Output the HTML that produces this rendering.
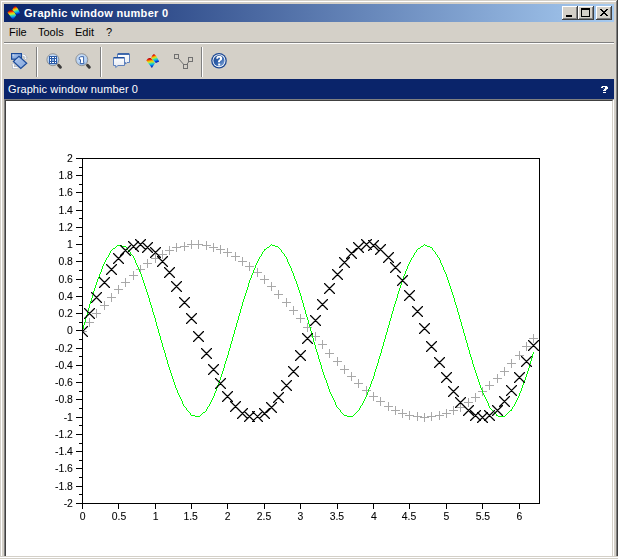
<!DOCTYPE html>
<html><head><meta charset="utf-8">
<style>
html,body{margin:0;padding:0}
body{width:618px;height:559px;overflow:hidden;position:relative;background:#d4d0c8;font-family:"Liberation Sans",sans-serif}
.a{position:absolute}
.t{position:absolute;white-space:nowrap;line-height:1}
</style></head><body>
<!-- window outer border -->
<div class="a" style="left:1px;top:1px;width:615px;height:1px;background:#fff"></div>
<div class="a" style="left:1px;top:1px;width:1px;height:555px;background:#fff"></div>
<div class="a" style="left:616px;top:1px;width:1px;height:555px;background:#808080"></div>
<div class="a" style="left:617px;top:0;width:1px;height:556px;background:#404040"></div>
<!-- title bar -->
<div class="a" style="left:4px;top:4px;width:610px;height:18px;background:linear-gradient(to right,#0a246a,#a6caf0)"></div>
<svg class="a" style="left:0;top:0" width="30" height="24" viewBox="0 0 30 24">
<defs>
<linearGradient id="lgA" gradientUnits="userSpaceOnUse" x1="7.6" y1="7.3" x2="8.9" y2="16.8"><stop offset="0" stop-color="#b00000"/><stop offset="0.12" stop-color="#f02000"/><stop offset="0.26" stop-color="#f8b000"/><stop offset="0.4" stop-color="#c8e830"/><stop offset="0.52" stop-color="#40e0a0"/><stop offset="0.66" stop-color="#10b0e8"/><stop offset="0.82" stop-color="#0048e0"/><stop offset="1" stop-color="#000098"/></linearGradient>
<linearGradient id="lgB" gradientUnits="userSpaceOnUse" x1="10.8" y1="3.3" x2="13.6" y2="12"><stop offset="0" stop-color="#b00000"/><stop offset="0.12" stop-color="#f02000"/><stop offset="0.26" stop-color="#f8b000"/><stop offset="0.4" stop-color="#c8e830"/><stop offset="0.52" stop-color="#40e0a0"/><stop offset="0.66" stop-color="#10b0e8"/><stop offset="0.82" stop-color="#0048e0"/><stop offset="1" stop-color="#000098"/></linearGradient>
</defs>
<g transform="translate(4.2 3)"><path d="M3.3 9.6 C4.6 7.4 6.2 6.7 7.4 7.1 C8.6 7.5 9.6 8.3 10.4 9.4 L11.9 12.3 L8.9 16.9 Z" fill="url(#lgA)"/>
<path d="M8.1 6.9 C9 4.6 10 3.1 11 3.2 C12 3.3 13 4.6 13.8 5.9 L16.2 10.4 L12.9 12.1 Z" fill="url(#lgB)"/></g>
</svg>
<div class="t" style="left:24px;top:8px;font-size:11px;font-weight:bold;color:#fff;letter-spacing:0.3px">Graphic window number 0</div>
<!-- caption buttons -->
<div class="a" style="left:562px;top:6px;width:16px;height:14px;background:#d4d0c8;box-shadow:inset -1px -1px #404040,inset 1px 1px #fff,inset -2px -2px #808080"></div>
<div class="a" style="left:566px;top:15px;width:6px;height:2px;background:#000"></div>
<div class="a" style="left:578px;top:6px;width:16px;height:14px;background:#d4d0c8;box-shadow:inset -1px -1px #404040,inset 1px 1px #fff,inset -2px -2px #808080"></div>
<div class="a" style="left:581px;top:8px;width:9px;height:9px;box-sizing:border-box;border:1px solid #000;border-top-width:2px"></div>
<div class="a" style="left:596px;top:6px;width:16px;height:14px;background:#d4d0c8;box-shadow:inset -1px -1px #404040,inset 1px 1px #fff,inset -2px -2px #808080"></div>
<svg class="a" style="left:596px;top:6px" width="16" height="14" viewBox="0 0 16 14" shape-rendering="crispEdges">
<path d="M4 3h2v1h-2zM10 3h2v1h-2zM5 4h2v1h-2zM9 4h2v1h-2zM6 5h4v1h-4zM7 6h2v1h-2zM6 7h4v1h-4zM5 8h2v1h-2zM9 8h2v1h-2zM4 9h2v1h-2zM10 9h2v1h-2z" fill="#000"/>
</svg>
<!-- menu -->
<div class="t" style="left:9px;top:27px;font-size:11px;color:#000">File</div>
<div class="t" style="left:38px;top:27px;font-size:11px;color:#000">Tools</div>
<div class="t" style="left:75px;top:27px;font-size:11px;color:#000">Edit</div>
<div class="t" style="left:106px;top:27px;font-size:11px;color:#000">?</div>
<div class="a" style="left:4px;top:42px;width:610px;height:1px;background:#808080"></div>
<div class="a" style="left:4px;top:43px;width:610px;height:1px;background:#fff"></div>
<!-- toolbar separators -->
<div class="a" style="left:36px;top:47px;width:1px;height:30px;background:#808080"></div>
<div class="a" style="left:37px;top:47px;width:1px;height:30px;background:#fff"></div>
<div class="a" style="left:100px;top:47px;width:1px;height:30px;background:#808080"></div>
<div class="a" style="left:101px;top:47px;width:1px;height:30px;background:#fff"></div>
<div class="a" style="left:201px;top:47px;width:1px;height:30px;background:#808080"></div>
<div class="a" style="left:202px;top:47px;width:1px;height:30px;background:#fff"></div>
<!-- toolbar icons -->
<svg class="a" style="left:0;top:44px" width="240" height="34" viewBox="0 44 240 34">
<defs>
<linearGradient id="bl" x1="0" y1="0" x2="1" y2="1"><stop offset="0" stop-color="#c0d4f2"/><stop offset="0.5" stop-color="#8eaee0"/><stop offset="1" stop-color="#6a92d0"/></linearGradient>
<linearGradient id="bl2" x1="0" y1="0" x2="1" y2="1"><stop offset="0" stop-color="#aac4ec"/><stop offset="1" stop-color="#86a8dc"/></linearGradient>
<radialGradient id="mg" cx="0.45" cy="0.4" r="0.6"><stop offset="0" stop-color="#e4eefc"/><stop offset="0.7" stop-color="#b4d0f2"/><stop offset="1" stop-color="#98bce8"/></radialGradient>
<linearGradient id="hg" x1="0" y1="0" x2="1" y2="1"><stop offset="0" stop-color="#1a4590"/><stop offset="0.55" stop-color="#3465ae"/><stop offset="1" stop-color="#94b4e2"/></linearGradient>
<linearGradient id="bub" x1="0" y1="0" x2="0" y2="1"><stop offset="0" stop-color="#ffffff"/><stop offset="1" stop-color="#e4e8f0"/></linearGradient>
</defs>
<!-- rotate icon -->
<path d="M22.3 55.2 q2.8 -0.3 3.3 2.3" fill="none" stroke="#a3adbd" stroke-width="2.2"/>
<path d="M23.8 57.6 h3.6 l-1.8 2.2z" fill="#fff" stroke="#a3adbd" stroke-width="0.6"/>
<path d="M22.3 55.2 q2.8 -0.3 3.3 2.3" fill="none" stroke="#fff" stroke-width="1.1"/>
<path d="M13.4 64.4 v3.2 h4.3" fill="none" stroke="#a3adbd" stroke-width="2.2"/>
<path d="M11.5 65.2 l1.9 -2.3 1.9 2.3z" fill="#fff" stroke="#a3adbd" stroke-width="0.6"/>
<path d="M13.4 64.4 v3.2 h4.3" fill="none" stroke="#fff" stroke-width="1.1"/>
<rect x="11.6" y="53.6" width="9.8" height="5.6" fill="url(#bl)" stroke="#1a4a9a" stroke-width="1.2"/>
<rect x="12.6" y="54.5" width="1" height="1" fill="#fff" opacity="0.8"/>
<path d="M13.4 61.5 L19 56.4 L26.7 63.3 L20.8 68.5 Z" fill="url(#bl2)" stroke="#1a4a9a" stroke-width="1.2"/>
<path d="M14.9 61.5 L19 57.8" stroke="#e8f0fc" stroke-width="0.7" stroke-dasharray="1 0.6"/>
<!-- zoom icons -->
<line x1="58.6" y1="65.3" x2="60.4" y2="67.2" stroke="#3c3c3c" stroke-width="3" stroke-linecap="round"/>
<circle cx="52.9" cy="59.7" r="6" fill="url(#mg)" stroke="#8c8c8c" stroke-width="0.9"/>
<rect x="49" y="56" width="8" height="8" fill="#2c5ba6" shape-rendering="crispEdges"/>
<path d="M50 57h1v1h-1zM55 57h1v1h-1zM50 62h1v1h-1zM55 62h1v1h-1zM52 57h2v1h-2zM52 62h2v1h-2zM50 59h1v2h-1zM55 59h1v2h-1z" fill="#fff" shape-rendering="crispEdges"/>
<rect x="52" y="59" width="2" height="2" fill="#8cb4e6" shape-rendering="crispEdges"/>
<line x1="87.5" y1="65.3" x2="89.3" y2="67.2" stroke="#3c3c3c" stroke-width="3" stroke-linecap="round"/>
<circle cx="81.8" cy="59.7" r="6" fill="url(#mg)" stroke="#8c8c8c" stroke-width="0.9"/>
<path d="M79.2 57.6 l1.6 -0.9 h2.8 v5.7 h0.3 v1.2 h-3.7 v-1.2 h0.3 v-2.8 h-1.3z" fill="#fff" stroke="#2452a0" stroke-width="0.9"/>
<!-- bubbles -->
<path d="M117.5 54h12v8.5h-2.5l-1.5 1.6v-1.6h-8z" fill="url(#bub)" stroke="#4f76b8" stroke-width="0.9" stroke-linejoin="round"/>
<path d="M113.5 57.5h11v8h-6.5l-2.3 2v-2h-2.2z" fill="url(#bub)" stroke="#4f76b8" stroke-width="0.9" stroke-linejoin="round"/>
<path d="M113.8 57.7h10.4M117.8 53.9h11.4" stroke="#1f4f9f" stroke-width="1.5"/>
<!-- scilab colour icon -->
<g transform="translate(143 51)"><path d="M3.3 9.6 C4.6 7.4 6.2 6.7 7.4 7.1 C8.6 7.5 9.6 8.3 10.4 9.4 L11.9 12.3 L8.9 16.9 Z" fill="url(#lgA)"/>
<path d="M8.1 6.9 C9 4.6 10 3.1 11 3.2 C12 3.3 13 4.6 13.8 5.9 L16.2 10.4 L12.9 12.1 Z" fill="url(#lgB)"/></g>
<!-- datatip polyline icon -->
<path d="M176.7 56.5 L185.4 66.4 L190.4 59.5" stroke="#707070" stroke-width="1" fill="none"/>
<rect x="174.5" y="54.5" width="4" height="4" fill="#d4d0c8" stroke="#707070" stroke-width="1"/>
<rect x="183.5" y="64.5" width="4" height="4" fill="#d4d0c8" stroke="#707070" stroke-width="1"/>
<rect x="188.5" y="57.5" width="4" height="4" fill="#d4d0c8" stroke="#707070" stroke-width="1"/>
<!-- help icon -->
<circle cx="219" cy="60.7" r="7.8" fill="#1c4894"/>
<circle cx="219" cy="60.7" r="6.5" fill="#fff"/>
<circle cx="219" cy="60.7" r="5.6" fill="url(#hg)"/>
<path d="M216.2 58.8 q0 -3 3 -3 q3 0 3 2.6 q0 1.6 -1.6 2.4 q-0.7 0.4 -0.7 1.5 h-2 q0 -1.9 1.2 -2.6 q0.9 -0.5 0.9 -1.2 q0 -0.9 -0.9 -0.9 q-1 0 -1 1.2 z M218.2 63.5h2v2.1h-2z" fill="#fff"/>
</svg>
<!-- header bar -->
<div class="a" style="left:4px;top:79px;width:610px;height:20px;background:#0a246a"></div>
<div class="t" style="left:8px;top:84px;font-size:11px;color:#fff;letter-spacing:0.1px">Graphic window number 0</div>
<svg class="a" style="left:598px;top:83px" width="14" height="14" viewBox="598 83 14 14" shape-rendering="crispEdges"><path fill="#fff" d="M602 86h5v1h-5zM601 87h2v1h-2zM605 87h3v2h-3zM604 89h3v1h-3zM603 90h3v1h-3zM603 92h3v1h-3z"/><path fill="#6f80b0" d="M601 86h1v1h-1zM607 86h1v1h-1zM603 88h2v1h-2zM606 89h1v1h-1z" opacity="0.5"/></svg>
<!-- canvas -->
<div class="a" style="left:4px;top:99px;width:610px;height:459px;box-sizing:border-box;background:#fff;border-style:solid;border-width:2px;border-color:#808080 #fff #fff #808080"></div>
<div class="a" style="left:5px;top:100px;width:608px;height:457px;box-sizing:border-box;border-style:solid;border-width:1px;border-color:#404040 #d4d0c8 #d4d0c8 #404040"></div>
<!-- bottom strip -->
<div class="a" style="left:0;top:556px;width:618px;height:1px;background:#d4d0c8"></div>
<div class="a" style="left:0;top:557px;width:618px;height:1px;background:#fff"></div>
<div class="a" style="left:0;top:558px;width:618px;height:1px;background:#d4d0c8"></div>
<svg width="618" height="559" viewBox="0 0 618 559" style="position:absolute;left:0;top:0;will-change:transform" shape-rendering="crispEdges">
<path fill="#a8a8a8" d="M191 240h1v1h-1zM198 240h1v1h-1zM191 241h1v1h-1zM198 241h1v1h-1zM206 241h1v1h-1zM184 242h1v1h-1zM191 242h1v1h-1zM198 242h1v1h-1zM206 242h1v1h-1zM176 243h1v1h-1zM184 243h1v1h-1zM191 243h1v1h-1zM198 243h1v1h-1zM206 243h1v1h-1zM213 243h1v1h-1zM176 244h1v1h-1zM184 244h1v1h-1zM187 244h16v1h-16zM206 244h1v1h-1zM213 244h1v1h-1zM176 245h1v1h-1zM184 245h1v1h-1zM191 245h1v1h-1zM198 245h1v1h-1zM202 245h9v1h-9zM213 245h1v1h-1zM220 245h1v1h-1zM169 246h1v1h-1zM176 246h1v1h-1zM180 246h9v1h-9zM191 246h1v1h-1zM198 246h1v1h-1zM206 246h1v1h-1zM213 246h1v1h-1zM220 246h1v1h-1zM169 247h1v1h-1zM172 247h9v1h-9zM184 247h1v1h-1zM191 247h1v1h-1zM198 247h1v1h-1zM206 247h1v1h-1zM209 247h9v1h-9zM220 247h1v1h-1zM169 248h1v1h-1zM176 248h1v1h-1zM184 248h1v1h-1zM191 248h1v1h-1zM198 248h1v1h-1zM206 248h1v1h-1zM213 248h1v1h-1zM220 248h1v1h-1zM227 248h1v1h-1zM169 249h1v1h-1zM176 249h1v1h-1zM184 249h1v1h-1zM206 249h1v1h-1zM213 249h1v1h-1zM216 249h9v1h-9zM227 249h1v1h-1zM162 250h1v1h-1zM165 250h9v1h-9zM176 250h1v1h-1zM184 250h1v1h-1zM213 250h1v1h-1zM220 250h1v1h-1zM227 250h1v1h-1zM162 251h1v1h-1zM169 251h1v1h-1zM176 251h1v1h-1zM213 251h1v1h-1zM220 251h1v1h-1zM227 251h1v1h-1zM162 252h1v1h-1zM169 252h1v1h-1zM220 252h1v1h-1zM223 252h9v1h-9zM235 252h1v1h-1zM162 253h1v1h-1zM169 253h1v1h-1zM220 253h1v1h-1zM227 253h1v1h-1zM235 253h1v1h-1zM155 254h1v1h-1zM158 254h9v1h-9zM169 254h1v1h-1zM227 254h1v1h-1zM235 254h1v1h-1zM155 255h1v1h-1zM162 255h1v1h-1zM227 255h1v1h-1zM235 255h1v1h-1zM155 256h1v1h-1zM162 256h1v1h-1zM227 256h1v1h-1zM231 256h9v1h-9zM155 257h1v1h-1zM162 257h1v1h-1zM235 257h1v1h-1zM242 257h1v1h-1zM151 258h9v1h-9zM162 258h1v1h-1zM235 258h1v1h-1zM242 258h1v1h-1zM147 259h1v1h-1zM155 259h1v1h-1zM235 259h1v1h-1zM242 259h1v1h-1zM147 260h1v1h-1zM155 260h1v1h-1zM235 260h1v1h-1zM242 260h1v1h-1zM147 261h1v1h-1zM155 261h1v1h-1zM238 261h9v1h-9zM147 262h1v1h-1zM155 262h1v1h-1zM242 262h1v1h-1zM249 262h1v1h-1zM143 263h9v1h-9zM242 263h1v1h-1zM249 263h1v1h-1zM147 264h1v1h-1zM242 264h1v1h-1zM249 264h1v1h-1zM140 265h1v1h-1zM147 265h1v1h-1zM242 265h1v1h-1zM249 265h1v1h-1zM140 266h1v1h-1zM147 266h1v1h-1zM245 266h9v1h-9zM140 267h1v1h-1zM147 267h1v1h-1zM249 267h1v1h-1zM140 268h1v1h-1zM249 268h1v1h-1zM257 268h1v1h-1zM136 269h9v1h-9zM249 269h1v1h-1zM257 269h1v1h-1zM140 270h1v1h-1zM249 270h1v1h-1zM257 270h1v1h-1zM133 271h1v1h-1zM140 271h1v1h-1zM257 271h1v1h-1zM133 272h1v1h-1zM140 272h1v1h-1zM253 272h9v1h-9zM133 273h1v1h-1zM140 273h1v1h-1zM257 273h1v1h-1zM133 274h1v1h-1zM257 274h1v1h-1zM129 275h9v1h-9zM257 275h1v1h-1zM264 275h1v1h-1zM133 276h1v1h-1zM257 276h1v1h-1zM264 276h1v1h-1zM133 277h1v1h-1zM264 277h1v1h-1zM125 278h1v1h-1zM133 278h1v1h-1zM264 278h1v1h-1zM125 279h1v1h-1zM133 279h1v1h-1zM260 279h9v1h-9zM125 280h1v1h-1zM264 280h1v1h-1zM125 281h1v1h-1zM264 281h1v1h-1zM121 282h9v1h-9zM264 282h1v1h-1zM271 282h1v1h-1zM125 283h1v1h-1zM264 283h1v1h-1zM271 283h1v1h-1zM125 284h1v1h-1zM271 284h1v1h-1zM118 285h1v1h-1zM125 285h1v1h-1zM271 285h1v1h-1zM118 286h1v1h-1zM125 286h1v1h-1zM267 286h9v1h-9zM118 287h1v1h-1zM271 287h1v1h-1zM118 288h1v1h-1zM271 288h1v1h-1zM114 289h9v1h-9zM271 289h1v1h-1zM118 290h1v1h-1zM271 290h1v1h-1zM278 290h1v1h-1zM118 291h1v1h-1zM278 291h1v1h-1zM118 292h1v1h-1zM278 292h1v1h-1zM111 293h1v1h-1zM118 293h1v1h-1zM278 293h1v1h-1zM111 294h1v1h-1zM274 294h9v1h-9zM111 295h1v1h-1zM278 295h1v1h-1zM111 296h1v1h-1zM278 296h1v1h-1zM107 297h9v1h-9zM278 297h1v1h-1zM111 298h1v1h-1zM278 298h1v1h-1zM286 298h1v1h-1zM111 299h1v1h-1zM286 299h1v1h-1zM111 300h1v1h-1zM286 300h1v1h-1zM104 301h1v1h-1zM111 301h1v1h-1zM286 301h1v1h-1zM104 302h1v1h-1zM282 302h9v1h-9zM104 303h1v1h-1zM286 303h1v1h-1zM104 304h1v1h-1zM286 304h1v1h-1zM100 305h9v1h-9zM286 305h1v1h-1zM104 306h1v1h-1zM286 306h1v1h-1zM293 306h1v1h-1zM104 307h1v1h-1zM293 307h1v1h-1zM104 308h1v1h-1zM293 308h1v1h-1zM96 309h1v1h-1zM104 309h1v1h-1zM293 309h1v1h-1zM96 310h1v1h-1zM289 310h9v1h-9zM96 311h1v1h-1zM293 311h1v1h-1zM96 312h1v1h-1zM293 312h1v1h-1zM92 313h9v1h-9zM293 313h1v1h-1zM96 314h1v1h-1zM293 314h1v1h-1zM300 314h1v1h-1zM96 315h1v1h-1zM300 315h1v1h-1zM96 316h1v1h-1zM300 316h1v1h-1zM96 317h1v1h-1zM300 317h1v1h-1zM89 318h1v1h-1zM296 318h9v1h-9zM89 319h1v1h-1zM300 319h1v1h-1zM89 320h1v1h-1zM300 320h1v1h-1zM89 321h1v1h-1zM300 321h1v1h-1zM85 322h9v1h-9zM300 322h1v1h-1zM89 323h1v1h-1zM307 323h1v1h-1zM89 324h1v1h-1zM307 324h1v1h-1zM89 325h1v1h-1zM307 325h1v1h-1zM89 326h1v1h-1zM307 326h1v1h-1zM82 327h1v1h-1zM303 327h9v1h-9zM82 328h1v1h-1zM307 328h1v1h-1zM82 329h1v1h-1zM307 329h1v1h-1zM82 330h1v1h-1zM307 330h1v1h-1zM82 331h5v1h-5zM307 331h1v1h-1zM82 332h1v1h-1zM315 332h1v1h-1zM82 333h1v1h-1zM315 333h1v1h-1zM82 334h1v1h-1zM315 334h1v1h-1zM533 334h1v1h-1zM82 335h1v1h-1zM315 335h1v1h-1zM533 335h1v1h-1zM311 336h9v1h-9zM533 336h1v1h-1zM315 337h1v1h-1zM533 337h1v1h-1zM315 338h1v1h-1zM529 338h9v1h-9zM315 339h1v1h-1zM533 339h1v1h-1zM315 340h1v1h-1zM322 340h1v1h-1zM533 340h1v1h-1zM322 341h1v1h-1zM533 341h1v1h-1zM322 342h1v1h-1zM526 342h1v1h-1zM533 342h1v1h-1zM322 343h1v1h-1zM526 343h1v1h-1zM318 344h9v1h-9zM526 344h1v1h-1zM322 345h1v1h-1zM526 345h1v1h-1zM322 346h1v1h-1zM522 346h9v1h-9zM322 347h1v1h-1zM526 347h1v1h-1zM322 348h1v1h-1zM526 348h1v1h-1zM329 349h1v1h-1zM526 349h1v1h-1zM329 350h1v1h-1zM526 350h1v1h-1zM329 351h1v1h-1zM519 351h1v1h-1zM329 352h1v1h-1zM519 352h1v1h-1zM325 353h9v1h-9zM519 353h1v1h-1zM329 354h1v1h-1zM519 354h1v1h-1zM329 355h1v1h-1zM515 355h9v1h-9zM329 356h1v1h-1zM519 356h1v1h-1zM329 357h1v1h-1zM337 357h1v1h-1zM519 357h1v1h-1zM337 358h1v1h-1zM519 358h1v1h-1zM337 359h1v1h-1zM511 359h1v1h-1zM519 359h1v1h-1zM337 360h1v1h-1zM511 360h1v1h-1zM333 361h9v1h-9zM511 361h1v1h-1zM337 362h1v1h-1zM511 362h1v1h-1zM337 363h1v1h-1zM507 363h9v1h-9zM337 364h1v1h-1zM511 364h1v1h-1zM337 365h1v1h-1zM344 365h1v1h-1zM511 365h1v1h-1zM344 366h1v1h-1zM511 366h1v1h-1zM344 367h1v1h-1zM504 367h1v1h-1zM511 367h1v1h-1zM344 368h1v1h-1zM504 368h1v1h-1zM340 369h9v1h-9zM504 369h1v1h-1zM344 370h1v1h-1zM504 370h1v1h-1zM344 371h1v1h-1zM500 371h9v1h-9zM344 372h1v1h-1zM351 372h1v1h-1zM504 372h1v1h-1zM344 373h1v1h-1zM351 373h1v1h-1zM504 373h1v1h-1zM351 374h1v1h-1zM497 374h1v1h-1zM504 374h1v1h-1zM351 375h1v1h-1zM497 375h1v1h-1zM504 375h1v1h-1zM347 376h9v1h-9zM497 376h1v1h-1zM351 377h1v1h-1zM497 377h1v1h-1zM351 378h1v1h-1zM493 378h9v1h-9zM351 379h1v1h-1zM358 379h1v1h-1zM497 379h1v1h-1zM351 380h1v1h-1zM358 380h1v1h-1zM497 380h1v1h-1zM358 381h1v1h-1zM489 381h1v1h-1zM497 381h1v1h-1zM358 382h1v1h-1zM489 382h1v1h-1zM497 382h1v1h-1zM354 383h9v1h-9zM489 383h1v1h-1zM358 384h1v1h-1zM489 384h1v1h-1zM358 385h1v1h-1zM485 385h9v1h-9zM358 386h1v1h-1zM366 386h1v1h-1zM489 386h1v1h-1zM358 387h1v1h-1zM366 387h1v1h-1zM482 387h1v1h-1zM489 387h1v1h-1zM366 388h1v1h-1zM482 388h1v1h-1zM489 388h1v1h-1zM366 389h1v1h-1zM482 389h1v1h-1zM489 389h1v1h-1zM362 390h9v1h-9zM482 390h1v1h-1zM366 391h1v1h-1zM478 391h9v1h-9zM366 392h1v1h-1zM373 392h1v1h-1zM482 392h1v1h-1zM366 393h1v1h-1zM373 393h1v1h-1zM475 393h1v1h-1zM482 393h1v1h-1zM366 394h1v1h-1zM373 394h1v1h-1zM475 394h1v1h-1zM482 394h1v1h-1zM373 395h1v1h-1zM475 395h1v1h-1zM482 395h1v1h-1zM369 396h9v1h-9zM475 396h1v1h-1zM373 397h1v1h-1zM380 397h1v1h-1zM471 397h9v1h-9zM373 398h1v1h-1zM380 398h1v1h-1zM468 398h1v1h-1zM475 398h1v1h-1zM373 399h1v1h-1zM380 399h1v1h-1zM468 399h1v1h-1zM475 399h1v1h-1zM373 400h1v1h-1zM380 400h1v1h-1zM468 400h1v1h-1zM475 400h1v1h-1zM376 401h9v1h-9zM468 401h1v1h-1zM475 401h1v1h-1zM380 402h1v1h-1zM388 402h1v1h-1zM464 402h9v1h-9zM380 403h1v1h-1zM388 403h1v1h-1zM460 403h1v1h-1zM468 403h1v1h-1zM380 404h1v1h-1zM388 404h1v1h-1zM460 404h1v1h-1zM468 404h1v1h-1zM380 405h1v1h-1zM388 405h1v1h-1zM460 405h1v1h-1zM468 405h1v1h-1zM384 406h9v1h-9zM395 406h1v1h-1zM453 406h1v1h-1zM460 406h1v1h-1zM468 406h1v1h-1zM388 407h1v1h-1zM395 407h1v1h-1zM453 407h1v1h-1zM456 407h9v1h-9zM388 408h1v1h-1zM395 408h1v1h-1zM453 408h1v1h-1zM460 408h1v1h-1zM388 409h1v1h-1zM395 409h1v1h-1zM402 409h1v1h-1zM446 409h1v1h-1zM453 409h1v1h-1zM460 409h1v1h-1zM388 410h1v1h-1zM391 410h9v1h-9zM402 410h1v1h-1zM446 410h1v1h-1zM449 410h9v1h-9zM460 410h1v1h-1zM395 411h1v1h-1zM402 411h1v1h-1zM409 411h1v1h-1zM439 411h1v1h-1zM446 411h1v1h-1zM453 411h1v1h-1zM460 411h1v1h-1zM395 412h1v1h-1zM402 412h1v1h-1zM409 412h1v1h-1zM417 412h1v1h-1zM431 412h1v1h-1zM439 412h1v1h-1zM446 412h1v1h-1zM453 412h1v1h-1zM395 413h1v1h-1zM398 413h9v1h-9zM409 413h1v1h-1zM417 413h1v1h-1zM424 413h1v1h-1zM431 413h1v1h-1zM439 413h1v1h-1zM442 413h9v1h-9zM453 413h1v1h-1zM395 414h1v1h-1zM402 414h1v1h-1zM409 414h1v1h-1zM417 414h1v1h-1zM424 414h1v1h-1zM431 414h1v1h-1zM439 414h1v1h-1zM446 414h1v1h-1zM453 414h1v1h-1zM402 415h1v1h-1zM405 415h9v1h-9zM417 415h1v1h-1zM424 415h1v1h-1zM431 415h1v1h-1zM435 415h9v1h-9zM446 415h1v1h-1zM402 416h1v1h-1zM409 416h1v1h-1zM413 416h9v1h-9zM424 416h1v1h-1zM427 416h9v1h-9zM439 416h1v1h-1zM446 416h1v1h-1zM402 417h1v1h-1zM409 417h1v1h-1zM417 417h1v1h-1zM420 417h9v1h-9zM431 417h1v1h-1zM439 417h1v1h-1zM446 417h1v1h-1zM409 418h1v1h-1zM417 418h1v1h-1zM424 418h1v1h-1zM431 418h1v1h-1zM439 418h1v1h-1zM409 419h1v1h-1zM417 419h1v1h-1zM424 419h1v1h-1zM431 419h1v1h-1zM439 419h1v1h-1zM417 420h1v1h-1zM424 420h1v1h-1zM431 420h1v1h-1zM424 421h1v1h-1z"/>
<path fill="#00ff00" d="M271 244h1v1h-1zM424 244h1v1h-1zM117 245h5v1h-5zM270 245h1v1h-1zM272 245h3v1h-3zM423 245h1v1h-1zM425 245h2v1h-2zM116 246h1v1h-1zM122 246h4v1h-4zM269 246h1v1h-1zM275 246h3v1h-3zM421 246h2v1h-2zM427 246h3v1h-3zM115 247h1v1h-1zM126 247h1v1h-1zM267 247h2v1h-2zM278 247h1v1h-1zM420 247h1v1h-1zM430 247h2v1h-2zM113 248h2v1h-2zM127 248h1v1h-1zM266 248h1v1h-1zM279 248h1v1h-1zM418 248h2v1h-2zM432 248h1v1h-1zM112 249h1v1h-1zM127 249h1v1h-1zM264 249h2v1h-2zM280 249h1v1h-1zM417 249h1v1h-1zM432 249h1v1h-1zM111 250h1v1h-1zM128 250h1v1h-1zM264 250h1v1h-1zM281 250h1v1h-1zM416 250h1v1h-1zM433 250h1v1h-1zM110 251h1v1h-1zM129 251h1v1h-1zM263 251h1v1h-1zM281 251h1v1h-1zM416 251h1v1h-1zM434 251h1v1h-1zM110 252h1v1h-1zM130 252h1v1h-1zM262 252h1v1h-1zM282 252h1v1h-1zM415 252h1v1h-1zM435 252h1v1h-1zM109 253h1v1h-1zM130 253h1v1h-1zM262 253h1v1h-1zM283 253h1v1h-1zM414 253h1v1h-1zM435 253h1v1h-1zM109 254h1v1h-1zM131 254h1v1h-1zM261 254h1v1h-1zM284 254h1v1h-1zM414 254h1v1h-1zM436 254h1v1h-1zM108 255h1v1h-1zM132 255h1v1h-1zM261 255h1v1h-1zM284 255h1v1h-1zM413 255h1v1h-1zM437 255h1v1h-1zM108 256h1v1h-1zM133 256h1v1h-1zM260 256h1v1h-1zM285 256h1v1h-1zM413 256h1v1h-1zM437 256h1v1h-1zM107 257h1v1h-1zM133 257h1v1h-1zM259 257h1v1h-1zM286 257h1v1h-1zM412 257h1v1h-1zM438 257h1v1h-1zM106 258h1v1h-1zM134 258h1v1h-1zM259 258h1v1h-1zM286 258h1v1h-1zM411 258h1v1h-1zM439 258h1v1h-1zM106 259h1v1h-1zM134 259h1v1h-1zM258 259h1v1h-1zM287 259h1v1h-1zM411 259h1v1h-1zM439 259h1v1h-1zM105 260h1v1h-1zM135 260h1v1h-1zM258 260h1v1h-1zM287 260h1v1h-1zM410 260h1v1h-1zM440 260h1v1h-1zM105 261h1v1h-1zM135 261h1v1h-1zM257 261h1v1h-1zM287 261h1v1h-1zM410 261h1v1h-1zM440 261h1v1h-1zM104 262h1v1h-1zM135 262h1v1h-1zM257 262h1v1h-1zM288 262h1v1h-1zM409 262h1v1h-1zM440 262h1v1h-1zM104 263h1v1h-1zM136 263h1v1h-1zM256 263h1v1h-1zM288 263h1v1h-1zM409 263h1v1h-1zM441 263h1v1h-1zM103 264h1v1h-1zM136 264h1v1h-1zM256 264h1v1h-1zM289 264h1v1h-1zM408 264h1v1h-1zM441 264h1v1h-1zM103 265h1v1h-1zM137 265h1v1h-1zM255 265h1v1h-1zM289 265h1v1h-1zM408 265h1v1h-1zM442 265h1v1h-1zM102 266h1v1h-1zM137 266h1v1h-1zM255 266h1v1h-1zM290 266h1v1h-1zM407 266h1v1h-1zM442 266h1v1h-1zM102 267h1v1h-1zM138 267h1v1h-1zM255 267h1v1h-1zM290 267h1v1h-1zM407 267h1v1h-1zM443 267h1v1h-1zM102 268h1v1h-1zM138 268h1v1h-1zM254 268h1v1h-1zM291 268h1v1h-1zM407 268h1v1h-1zM443 268h1v1h-1zM101 269h1v1h-1zM139 269h1v1h-1zM254 269h1v1h-1zM291 269h1v1h-1zM406 269h1v1h-1zM443 269h1v1h-1zM101 270h1v1h-1zM139 270h1v1h-1zM253 270h1v1h-1zM291 270h1v1h-1zM406 270h1v1h-1zM444 270h1v1h-1zM101 271h1v1h-1zM139 271h1v1h-1zM253 271h1v1h-1zM292 271h1v1h-1zM405 271h1v1h-1zM444 271h1v1h-1zM100 272h1v1h-1zM140 272h1v1h-1zM253 272h1v1h-1zM292 272h1v1h-1zM405 272h1v1h-1zM445 272h1v1h-1zM100 273h1v1h-1zM140 273h1v1h-1zM252 273h1v1h-1zM293 273h1v1h-1zM405 273h1v1h-1zM445 273h1v1h-1zM99 274h1v1h-1zM141 274h1v1h-1zM252 274h1v1h-1zM293 274h1v1h-1zM404 274h1v1h-1zM446 274h1v1h-1zM99 275h1v1h-1zM141 275h1v1h-1zM251 275h1v1h-1zM293 275h1v1h-1zM404 275h1v1h-1zM446 275h1v1h-1zM99 276h1v1h-1zM141 276h1v1h-1zM251 276h1v1h-1zM294 276h1v1h-1zM403 276h1v1h-1zM446 276h1v1h-1zM98 277h1v1h-1zM142 277h1v1h-1zM251 277h1v1h-1zM294 277h1v1h-1zM403 277h1v1h-1zM447 277h1v1h-1zM98 278h1v1h-1zM142 278h1v1h-1zM250 278h1v1h-1zM294 278h1v1h-1zM403 278h1v1h-1zM447 278h1v1h-1zM97 279h1v1h-1zM142 279h1v1h-1zM250 279h1v1h-1zM295 279h1v1h-1zM402 279h1v1h-1zM447 279h1v1h-1zM97 280h1v1h-1zM143 280h1v1h-1zM249 280h1v1h-1zM295 280h1v1h-1zM402 280h1v1h-1zM448 280h1v1h-1zM97 281h1v1h-1zM143 281h1v1h-1zM249 281h1v1h-1zM296 281h1v1h-1zM402 281h1v1h-1zM448 281h1v1h-1zM96 282h1v1h-1zM143 282h1v1h-1zM249 282h1v1h-1zM296 282h1v1h-1zM401 282h1v1h-1zM448 282h1v1h-1zM96 283h1v1h-1zM144 283h1v1h-1zM248 283h1v1h-1zM296 283h1v1h-1zM401 283h1v1h-1zM449 283h1v1h-1zM96 284h1v1h-1zM144 284h1v1h-1zM248 284h1v1h-1zM297 284h1v1h-1zM401 284h1v1h-1zM449 284h1v1h-1zM95 285h1v1h-1zM144 285h1v1h-1zM248 285h1v1h-1zM297 285h1v1h-1zM400 285h1v1h-1zM449 285h1v1h-1zM95 286h1v1h-1zM145 286h1v1h-1zM248 286h1v1h-1zM297 286h1v1h-1zM400 286h1v1h-1zM450 286h1v1h-1zM95 287h1v1h-1zM145 287h1v1h-1zM247 287h1v1h-1zM298 287h1v1h-1zM400 287h1v1h-1zM450 287h1v1h-1zM94 288h1v1h-1zM145 288h1v1h-1zM247 288h1v1h-1zM298 288h1v1h-1zM399 288h1v1h-1zM450 288h1v1h-1zM94 289h1v1h-1zM146 289h1v1h-1zM247 289h1v1h-1zM298 289h1v1h-1zM399 289h1v1h-1zM451 289h1v1h-1zM94 290h1v1h-1zM146 290h1v1h-1zM246 290h1v1h-1zM299 290h1v1h-1zM399 290h1v1h-1zM451 290h1v1h-1zM93 291h1v1h-1zM146 291h1v1h-1zM246 291h1v1h-1zM299 291h1v1h-1zM398 291h1v1h-1zM451 291h1v1h-1zM93 292h1v1h-1zM147 292h1v1h-1zM246 292h1v1h-1zM299 292h1v1h-1zM398 292h1v1h-1zM452 292h1v1h-1zM93 293h1v1h-1zM147 293h1v1h-1zM245 293h1v1h-1zM300 293h1v1h-1zM398 293h1v1h-1zM452 293h1v1h-1zM93 294h1v1h-1zM147 294h1v1h-1zM245 294h1v1h-1zM300 294h1v1h-1zM397 294h1v1h-1zM452 294h1v1h-1zM92 295h1v1h-1zM148 295h1v1h-1zM245 295h1v1h-1zM300 295h1v1h-1zM397 295h1v1h-1zM453 295h1v1h-1zM92 296h1v1h-1zM148 296h1v1h-1zM244 296h1v1h-1zM301 296h1v1h-1zM397 296h1v1h-1zM453 296h1v1h-1zM92 297h1v1h-1zM148 297h1v1h-1zM244 297h1v1h-1zM301 297h1v1h-1zM397 297h1v1h-1zM453 297h1v1h-1zM91 298h1v1h-1zM149 298h1v1h-1zM244 298h1v1h-1zM301 298h1v1h-1zM396 298h1v1h-1zM454 298h1v1h-1zM91 299h1v1h-1zM149 299h1v1h-1zM243 299h1v1h-1zM301 299h1v1h-1zM396 299h1v1h-1zM454 299h1v1h-1zM91 300h1v1h-1zM149 300h1v1h-1zM243 300h1v1h-1zM302 300h1v1h-1zM396 300h1v1h-1zM454 300h1v1h-1zM90 301h1v1h-1zM149 301h1v1h-1zM243 301h1v1h-1zM302 301h1v1h-1zM395 301h1v1h-1zM454 301h1v1h-1zM90 302h1v1h-1zM150 302h1v1h-1zM242 302h1v1h-1zM302 302h1v1h-1zM395 302h1v1h-1zM455 302h1v1h-1zM90 303h1v1h-1zM150 303h1v1h-1zM242 303h1v1h-1zM303 303h1v1h-1zM395 303h1v1h-1zM455 303h1v1h-1zM89 304h1v1h-1zM150 304h1v1h-1zM242 304h1v1h-1zM303 304h1v1h-1zM394 304h1v1h-1zM455 304h1v1h-1zM89 305h1v1h-1zM151 305h1v1h-1zM242 305h1v1h-1zM303 305h1v1h-1zM394 305h1v1h-1zM456 305h1v1h-1zM89 306h1v1h-1zM151 306h1v1h-1zM241 306h1v1h-1zM303 306h1v1h-1zM394 306h1v1h-1zM456 306h1v1h-1zM89 307h1v1h-1zM151 307h1v1h-1zM241 307h1v1h-1zM304 307h1v1h-1zM393 307h1v1h-1zM456 307h1v1h-1zM88 308h1v1h-1zM152 308h1v1h-1zM241 308h1v1h-1zM304 308h1v1h-1zM393 308h1v1h-1zM457 308h1v1h-1zM88 309h1v1h-1zM152 309h1v1h-1zM240 309h1v1h-1zM304 309h1v1h-1zM393 309h1v1h-1zM457 309h1v1h-1zM88 310h1v1h-1zM152 310h1v1h-1zM240 310h1v1h-1zM305 310h1v1h-1zM393 310h1v1h-1zM457 310h1v1h-1zM87 311h1v1h-1zM152 311h1v1h-1zM240 311h1v1h-1zM305 311h1v1h-1zM392 311h1v1h-1zM457 311h1v1h-1zM87 312h1v1h-1zM153 312h1v1h-1zM240 312h1v1h-1zM305 312h1v1h-1zM392 312h1v1h-1zM458 312h1v1h-1zM87 313h1v1h-1zM153 313h1v1h-1zM239 313h1v1h-1zM305 313h1v1h-1zM392 313h1v1h-1zM458 313h1v1h-1zM87 314h1v1h-1zM153 314h1v1h-1zM239 314h1v1h-1zM306 314h1v1h-1zM391 314h1v1h-1zM458 314h1v1h-1zM86 315h1v1h-1zM154 315h1v1h-1zM239 315h1v1h-1zM306 315h1v1h-1zM391 315h1v1h-1zM459 315h1v1h-1zM86 316h1v1h-1zM154 316h1v1h-1zM238 316h1v1h-1zM306 316h1v1h-1zM391 316h1v1h-1zM459 316h1v1h-1zM86 317h1v1h-1zM154 317h1v1h-1zM238 317h1v1h-1zM307 317h1v1h-1zM391 317h1v1h-1zM459 317h1v1h-1zM85 318h1v1h-1zM155 318h1v1h-1zM238 318h1v1h-1zM307 318h1v1h-1zM390 318h1v1h-1zM459 318h1v1h-1zM85 319h1v1h-1zM155 319h1v1h-1zM238 319h1v1h-1zM307 319h1v1h-1zM390 319h1v1h-1zM460 319h1v1h-1zM85 320h1v1h-1zM155 320h1v1h-1zM237 320h1v1h-1zM308 320h1v1h-1zM390 320h1v1h-1zM460 320h1v1h-1zM85 321h1v1h-1zM155 321h1v1h-1zM237 321h1v1h-1zM308 321h1v1h-1zM389 321h1v1h-1zM460 321h1v1h-1zM84 322h1v1h-1zM156 322h1v1h-1zM237 322h1v1h-1zM308 322h1v1h-1zM389 322h1v1h-1zM461 322h1v1h-1zM84 323h1v1h-1zM156 323h1v1h-1zM236 323h1v1h-1zM308 323h1v1h-1zM389 323h1v1h-1zM461 323h1v1h-1zM84 324h1v1h-1zM156 324h1v1h-1zM236 324h1v1h-1zM309 324h1v1h-1zM389 324h1v1h-1zM461 324h1v1h-1zM83 325h1v1h-1zM156 325h1v1h-1zM236 325h1v1h-1zM309 325h1v1h-1zM388 325h1v1h-1zM461 325h1v1h-1zM83 326h1v1h-1zM157 326h1v1h-1zM236 326h1v1h-1zM309 326h1v1h-1zM388 326h1v1h-1zM462 326h1v1h-1zM83 327h1v1h-1zM157 327h1v1h-1zM235 327h1v1h-1zM310 327h1v1h-1zM388 327h1v1h-1zM462 327h1v1h-1zM83 328h1v1h-1zM157 328h1v1h-1zM235 328h1v1h-1zM310 328h1v1h-1zM387 328h1v1h-1zM462 328h1v1h-1zM82 329h1v1h-1zM158 329h1v1h-1zM235 329h1v1h-1zM310 329h1v1h-1zM387 329h1v1h-1zM463 329h1v1h-1zM82 330h1v1h-1zM158 330h1v1h-1zM234 330h1v1h-1zM310 330h1v1h-1zM387 330h1v1h-1zM463 330h1v1h-1zM158 331h1v1h-1zM234 331h1v1h-1zM311 331h1v1h-1zM387 331h1v1h-1zM463 331h1v1h-1zM158 332h1v1h-1zM234 332h1v1h-1zM311 332h1v1h-1zM386 332h1v1h-1zM463 332h1v1h-1zM159 333h1v1h-1zM234 333h1v1h-1zM311 333h1v1h-1zM386 333h1v1h-1zM464 333h1v1h-1zM159 334h1v1h-1zM233 334h1v1h-1zM312 334h1v1h-1zM386 334h1v1h-1zM464 334h1v1h-1zM159 335h1v1h-1zM233 335h1v1h-1zM312 335h1v1h-1zM385 335h1v1h-1zM464 335h1v1h-1zM160 336h1v1h-1zM233 336h1v1h-1zM312 336h1v1h-1zM385 336h1v1h-1zM465 336h1v1h-1zM160 337h1v1h-1zM232 337h1v1h-1zM312 337h1v1h-1zM385 337h1v1h-1zM465 337h1v1h-1zM160 338h1v1h-1zM232 338h1v1h-1zM313 338h1v1h-1zM385 338h1v1h-1zM465 338h1v1h-1zM160 339h1v1h-1zM232 339h1v1h-1zM313 339h1v1h-1zM384 339h1v1h-1zM465 339h1v1h-1zM161 340h1v1h-1zM232 340h1v1h-1zM313 340h1v1h-1zM384 340h1v1h-1zM466 340h1v1h-1zM161 341h1v1h-1zM231 341h1v1h-1zM313 341h1v1h-1zM384 341h1v1h-1zM466 341h1v1h-1zM161 342h1v1h-1zM231 342h1v1h-1zM314 342h1v1h-1zM383 342h1v1h-1zM466 342h1v1h-1zM162 343h1v1h-1zM231 343h1v1h-1zM314 343h1v1h-1zM383 343h1v1h-1zM467 343h1v1h-1zM162 344h1v1h-1zM230 344h1v1h-1zM314 344h1v1h-1zM383 344h1v1h-1zM467 344h1v1h-1zM162 345h1v1h-1zM230 345h1v1h-1zM315 345h1v1h-1zM383 345h1v1h-1zM467 345h1v1h-1zM162 346h1v1h-1zM230 346h1v1h-1zM315 346h1v1h-1zM382 346h1v1h-1zM467 346h1v1h-1zM163 347h1v1h-1zM230 347h1v1h-1zM315 347h1v1h-1zM382 347h1v1h-1zM468 347h1v1h-1zM163 348h1v1h-1zM229 348h1v1h-1zM315 348h1v1h-1zM382 348h1v1h-1zM468 348h1v1h-1zM163 349h1v1h-1zM229 349h1v1h-1zM316 349h1v1h-1zM381 349h1v1h-1zM468 349h1v1h-1zM164 350h1v1h-1zM229 350h1v1h-1zM316 350h1v1h-1zM381 350h1v1h-1zM469 350h1v1h-1zM164 351h1v1h-1zM228 351h1v1h-1zM316 351h1v1h-1zM381 351h1v1h-1zM469 351h1v1h-1zM164 352h1v1h-1zM228 352h1v1h-1zM317 352h1v1h-1zM381 352h1v1h-1zM469 352h1v1h-1zM533 352h1v1h-1zM165 353h1v1h-1zM228 353h1v1h-1zM317 353h1v1h-1zM380 353h1v1h-1zM469 353h1v1h-1zM533 353h1v1h-1zM165 354h1v1h-1zM228 354h1v1h-1zM317 354h1v1h-1zM380 354h1v1h-1zM470 354h1v1h-1zM532 354h1v1h-1zM165 355h1v1h-1zM227 355h1v1h-1zM318 355h1v1h-1zM380 355h1v1h-1zM470 355h1v1h-1zM532 355h1v1h-1zM165 356h1v1h-1zM227 356h1v1h-1zM318 356h1v1h-1zM379 356h1v1h-1zM470 356h1v1h-1zM532 356h1v1h-1zM166 357h1v1h-1zM227 357h1v1h-1zM318 357h1v1h-1zM379 357h1v1h-1zM471 357h1v1h-1zM532 357h1v1h-1zM166 358h1v1h-1zM226 358h1v1h-1zM318 358h1v1h-1zM379 358h1v1h-1zM471 358h1v1h-1zM531 358h1v1h-1zM166 359h1v1h-1zM226 359h1v1h-1zM319 359h1v1h-1zM378 359h1v1h-1zM471 359h1v1h-1zM531 359h1v1h-1zM167 360h1v1h-1zM226 360h1v1h-1zM319 360h1v1h-1zM378 360h1v1h-1zM472 360h1v1h-1zM531 360h1v1h-1zM167 361h1v1h-1zM225 361h1v1h-1zM319 361h1v1h-1zM378 361h1v1h-1zM472 361h1v1h-1zM530 361h1v1h-1zM167 362h1v1h-1zM225 362h1v1h-1zM320 362h1v1h-1zM378 362h1v1h-1zM472 362h1v1h-1zM530 362h1v1h-1zM167 363h1v1h-1zM225 363h1v1h-1zM320 363h1v1h-1zM377 363h1v1h-1zM472 363h1v1h-1zM530 363h1v1h-1zM168 364h1v1h-1zM224 364h1v1h-1zM320 364h1v1h-1zM377 364h1v1h-1zM473 364h1v1h-1zM529 364h1v1h-1zM168 365h1v1h-1zM224 365h1v1h-1zM321 365h1v1h-1zM377 365h1v1h-1zM473 365h1v1h-1zM529 365h1v1h-1zM168 366h1v1h-1zM224 366h1v1h-1zM321 366h1v1h-1zM376 366h1v1h-1zM473 366h1v1h-1zM529 366h1v1h-1zM169 367h1v1h-1zM224 367h1v1h-1zM321 367h1v1h-1zM376 367h1v1h-1zM474 367h1v1h-1zM529 367h1v1h-1zM169 368h1v1h-1zM223 368h1v1h-1zM321 368h1v1h-1zM376 368h1v1h-1zM474 368h1v1h-1zM528 368h1v1h-1zM169 369h1v1h-1zM223 369h1v1h-1zM322 369h1v1h-1zM375 369h1v1h-1zM474 369h1v1h-1zM528 369h1v1h-1zM170 370h1v1h-1zM223 370h1v1h-1zM322 370h1v1h-1zM375 370h1v1h-1zM475 370h1v1h-1zM528 370h1v1h-1zM170 371h1v1h-1zM222 371h1v1h-1zM322 371h1v1h-1zM375 371h1v1h-1zM475 371h1v1h-1zM527 371h1v1h-1zM170 372h1v1h-1zM222 372h1v1h-1zM323 372h1v1h-1zM374 372h1v1h-1zM475 372h1v1h-1zM527 372h1v1h-1zM171 373h1v1h-1zM222 373h1v1h-1zM323 373h1v1h-1zM374 373h1v1h-1zM476 373h1v1h-1zM527 373h1v1h-1zM171 374h1v1h-1zM221 374h1v1h-1zM323 374h1v1h-1zM374 374h1v1h-1zM476 374h1v1h-1zM526 374h1v1h-1zM171 375h1v1h-1zM221 375h1v1h-1zM324 375h1v1h-1zM374 375h1v1h-1zM476 375h1v1h-1zM526 375h1v1h-1zM172 376h1v1h-1zM221 376h1v1h-1zM324 376h1v1h-1zM373 376h1v1h-1zM477 376h1v1h-1zM526 376h1v1h-1zM172 377h1v1h-1zM220 377h1v1h-1zM324 377h1v1h-1zM373 377h1v1h-1zM477 377h1v1h-1zM525 377h1v1h-1zM172 378h1v1h-1zM220 378h1v1h-1zM325 378h1v1h-1zM373 378h1v1h-1zM477 378h1v1h-1zM525 378h1v1h-1zM173 379h1v1h-1zM220 379h1v1h-1zM325 379h1v1h-1zM372 379h1v1h-1zM478 379h1v1h-1zM525 379h1v1h-1zM173 380h1v1h-1zM219 380h1v1h-1zM326 380h1v1h-1zM372 380h1v1h-1zM478 380h1v1h-1zM524 380h1v1h-1zM173 381h1v1h-1zM219 381h1v1h-1zM326 381h1v1h-1zM371 381h1v1h-1zM478 381h1v1h-1zM524 381h1v1h-1zM174 382h1v1h-1zM219 382h1v1h-1zM326 382h1v1h-1zM371 382h1v1h-1zM479 382h1v1h-1zM523 382h1v1h-1zM174 383h1v1h-1zM218 383h1v1h-1zM327 383h1v1h-1zM371 383h1v1h-1zM479 383h1v1h-1zM523 383h1v1h-1zM174 384h1v1h-1zM218 384h1v1h-1zM327 384h1v1h-1zM370 384h1v1h-1zM479 384h1v1h-1zM523 384h1v1h-1zM175 385h1v1h-1zM217 385h1v1h-1zM327 385h1v1h-1zM370 385h1v1h-1zM480 385h1v1h-1zM522 385h1v1h-1zM175 386h1v1h-1zM217 386h1v1h-1zM328 386h1v1h-1zM370 386h1v1h-1zM480 386h1v1h-1zM522 386h1v1h-1zM175 387h1v1h-1zM217 387h1v1h-1zM328 387h1v1h-1zM369 387h1v1h-1zM480 387h1v1h-1zM522 387h1v1h-1zM176 388h1v1h-1zM216 388h1v1h-1zM328 388h1v1h-1zM369 388h1v1h-1zM481 388h1v1h-1zM521 388h1v1h-1zM176 389h1v1h-1zM216 389h1v1h-1zM329 389h1v1h-1zM368 389h1v1h-1zM481 389h1v1h-1zM521 389h1v1h-1zM177 390h1v1h-1zM216 390h1v1h-1zM329 390h1v1h-1zM368 390h1v1h-1zM482 390h1v1h-1zM521 390h1v1h-1zM177 391h1v1h-1zM215 391h1v1h-1zM329 391h1v1h-1zM368 391h1v1h-1zM482 391h1v1h-1zM520 391h1v1h-1zM177 392h1v1h-1zM215 392h1v1h-1zM330 392h1v1h-1zM367 392h1v1h-1zM482 392h1v1h-1zM520 392h1v1h-1zM178 393h1v1h-1zM214 393h1v1h-1zM330 393h1v1h-1zM367 393h1v1h-1zM483 393h1v1h-1zM519 393h1v1h-1zM178 394h1v1h-1zM214 394h1v1h-1zM331 394h1v1h-1zM367 394h1v1h-1zM483 394h1v1h-1zM519 394h1v1h-1zM179 395h1v1h-1zM214 395h1v1h-1zM331 395h1v1h-1zM366 395h1v1h-1zM484 395h1v1h-1zM519 395h1v1h-1zM179 396h1v1h-1zM213 396h1v1h-1zM332 396h1v1h-1zM366 396h1v1h-1zM484 396h1v1h-1zM518 396h1v1h-1zM180 397h1v1h-1zM213 397h1v1h-1zM332 397h1v1h-1zM365 397h1v1h-1zM485 397h1v1h-1zM518 397h1v1h-1zM180 398h1v1h-1zM212 398h1v1h-1zM333 398h1v1h-1zM365 398h1v1h-1zM485 398h1v1h-1zM517 398h1v1h-1zM181 399h1v1h-1zM212 399h1v1h-1zM333 399h1v1h-1zM364 399h1v1h-1zM486 399h1v1h-1zM517 399h1v1h-1zM181 400h1v1h-1zM211 400h1v1h-1zM334 400h1v1h-1zM364 400h1v1h-1zM486 400h1v1h-1zM516 400h1v1h-1zM182 401h1v1h-1zM211 401h1v1h-1zM334 401h1v1h-1zM363 401h1v1h-1zM487 401h1v1h-1zM516 401h1v1h-1zM182 402h1v1h-1zM210 402h1v1h-1zM335 402h1v1h-1zM363 402h1v1h-1zM487 402h1v1h-1zM515 402h1v1h-1zM182 403h1v1h-1zM210 403h1v1h-1zM335 403h1v1h-1zM362 403h1v1h-1zM488 403h1v1h-1zM515 403h1v1h-1zM183 404h1v1h-1zM209 404h1v1h-1zM335 404h1v1h-1zM362 404h1v1h-1zM488 404h1v1h-1zM514 404h1v1h-1zM183 405h1v1h-1zM209 405h1v1h-1zM336 405h1v1h-1zM361 405h1v1h-1zM488 405h1v1h-1zM514 405h1v1h-1zM184 406h1v1h-1zM208 406h1v1h-1zM336 406h1v1h-1zM360 406h1v1h-1zM489 406h1v1h-1zM513 406h1v1h-1zM185 407h1v1h-1zM207 407h1v1h-1zM337 407h1v1h-1zM360 407h1v1h-1zM489 407h1v1h-1zM512 407h1v1h-1zM186 408h1v1h-1zM207 408h1v1h-1zM338 408h1v1h-1zM359 408h1v1h-1zM490 408h1v1h-1zM512 408h1v1h-1zM186 409h1v1h-1zM206 409h1v1h-1zM339 409h1v1h-1zM359 409h1v1h-1zM491 409h1v1h-1zM511 409h1v1h-1zM187 410h1v1h-1zM206 410h1v1h-1zM340 410h1v1h-1zM358 410h1v1h-1zM492 410h1v1h-1zM510 410h2v1h-2zM188 411h1v1h-1zM205 411h1v1h-1zM340 411h1v1h-1zM357 411h1v1h-1zM493 411h1v1h-1zM509 411h1v1h-1zM189 412h1v1h-1zM203 412h2v1h-2zM341 412h1v1h-1zM356 412h1v1h-1zM494 412h1v1h-1zM508 412h1v1h-1zM190 413h1v1h-1zM202 413h1v1h-1zM342 413h1v1h-1zM355 413h1v1h-1zM495 413h1v1h-1zM507 413h1v1h-1zM190 414h1v1h-1zM201 414h1v1h-1zM343 414h1v1h-1zM354 414h1v1h-1zM496 414h1v1h-1zM506 414h1v1h-1zM191 415h4v1h-4zM200 415h1v1h-1zM344 415h3v1h-3zM353 415h1v1h-1zM496 415h2v1h-2zM505 415h1v1h-1zM195 416h5v1h-5zM347 416h6v1h-6zM498 416h7v1h-7z"/>
<path fill="#000" d="M135 239h1v1h-1zM145 239h1v1h-1zM361 239h1v1h-1zM371 239h1v1h-1zM136 240h1v1h-1zM144 240h1v1h-1zM362 240h1v1h-1zM368 240h1v1h-1zM370 240h1v1h-1zM378 240h1v1h-1zM128 241h1v1h-1zM137 241h2v1h-2zM143 241h1v1h-1zM363 241h1v1h-1zM369 241h1v1h-1zM377 241h1v1h-1zM129 242h1v1h-1zM137 242h2v1h-2zM142 242h1v1h-1zM152 242h1v1h-1zM353 242h1v1h-1zM363 242h2v1h-2zM368 242h1v1h-1zM370 242h1v1h-1zM376 242h1v1h-1zM130 243h1v1h-1zM136 243h1v1h-1zM139 243h1v1h-1zM141 243h1v1h-1zM143 243h1v1h-1zM151 243h1v1h-1zM354 243h1v1h-1zM362 243h1v1h-1zM365 243h1v1h-1zM367 243h1v1h-1zM371 243h1v1h-1zM375 243h1v1h-1zM131 244h1v1h-1zM135 244h1v1h-1zM140 244h1v1h-1zM144 244h1v1h-1zM150 244h1v1h-1zM355 244h1v1h-1zM361 244h1v1h-1zM366 244h1v1h-1zM372 244h1v1h-1zM374 244h2v1h-2zM385 244h1v1h-1zM120 245h1v1h-1zM130 245h1v1h-1zM132 245h1v1h-1zM134 245h1v1h-1zM139 245h1v1h-1zM141 245h1v1h-1zM145 245h1v1h-1zM149 245h1v1h-1zM356 245h1v1h-1zM360 245h1v1h-1zM365 245h1v1h-1zM367 245h1v1h-1zM373 245h1v1h-1zM376 245h1v1h-1zM384 245h1v1h-1zM121 246h1v1h-1zM129 246h1v1h-1zM133 246h1v1h-1zM138 246h1v1h-1zM142 246h1v1h-1zM146 246h1v1h-1zM148 246h1v1h-1zM357 246h1v1h-1zM359 246h1v1h-1zM364 246h1v1h-1zM368 246h1v1h-1zM372 246h1v1h-1zM374 246h1v1h-1zM377 246h1v1h-1zM383 246h1v1h-1zM122 247h1v1h-1zM128 247h1v1h-1zM132 247h1v1h-1zM134 247h1v1h-1zM137 247h1v1h-1zM143 247h1v1h-1zM147 247h1v1h-1zM150 247h1v1h-1zM160 247h1v1h-1zM358 247h1v1h-1zM363 247h1v1h-1zM369 247h1v1h-1zM371 247h1v1h-1zM375 247h1v1h-1zM378 247h1v1h-1zM382 247h1v1h-1zM123 248h1v1h-1zM127 248h1v1h-1zM131 248h1v1h-1zM135 248h2v1h-2zM144 248h1v1h-1zM146 248h1v1h-1zM148 248h1v1h-1zM151 248h1v1h-1zM159 248h1v1h-1zM346 248h1v1h-1zM356 248h2v1h-2zM359 248h1v1h-1zM362 248h1v1h-1zM370 248h1v1h-1zM376 248h1v1h-1zM379 248h1v1h-1zM381 248h1v1h-1zM124 249h1v1h-1zM126 249h1v1h-1zM130 249h1v1h-1zM135 249h2v1h-2zM145 249h1v1h-1zM149 249h1v1h-1zM152 249h1v1h-1zM158 249h1v1h-1zM347 249h1v1h-1zM355 249h2v1h-2zM360 249h2v1h-2zM369 249h1v1h-1zM371 249h1v1h-1zM377 249h1v1h-1zM380 249h1v1h-1zM125 250h1v1h-1zM129 250h1v1h-1zM137 250h1v1h-1zM144 250h1v1h-1zM150 250h1v1h-1zM153 250h1v1h-1zM157 250h1v1h-1zM348 250h1v1h-1zM354 250h2v1h-2zM361 250h1v1h-1zM368 250h1v1h-1zM378 250h2v1h-2zM381 250h1v1h-1zM124 251h1v1h-1zM126 251h1v1h-1zM128 251h1v1h-1zM138 251h1v1h-1zM143 251h1v1h-1zM151 251h1v1h-1zM154 251h1v1h-1zM156 251h1v1h-1zM349 251h1v1h-1zM353 251h2v1h-2zM362 251h1v1h-1zM378 251h1v1h-1zM382 251h1v1h-1zM123 252h1v1h-1zM127 252h1v1h-1zM142 252h1v1h-1zM152 252h1v1h-1zM155 252h1v1h-1zM350 252h1v1h-1zM352 252h2v1h-2zM363 252h1v1h-1zM377 252h1v1h-1zM383 252h1v1h-1zM393 252h1v1h-1zM113 253h1v1h-1zM122 253h2v1h-2zM128 253h1v1h-1zM154 253h1v1h-1zM156 253h1v1h-1zM351 253h1v1h-1zM376 253h1v1h-1zM384 253h1v1h-1zM392 253h1v1h-1zM114 254h1v1h-1zM121 254h2v1h-2zM129 254h1v1h-1zM153 254h1v1h-1zM157 254h1v1h-1zM350 254h1v1h-1zM352 254h1v1h-1zM375 254h1v1h-1zM385 254h1v1h-1zM391 254h1v1h-1zM115 255h1v1h-1zM120 255h2v1h-2zM130 255h1v1h-1zM152 255h1v1h-1zM158 255h1v1h-1zM349 255h1v1h-1zM353 255h1v1h-1zM386 255h1v1h-1zM390 255h1v1h-1zM116 256h1v1h-1zM120 256h1v1h-1zM151 256h1v1h-1zM157 256h1v1h-1zM159 256h1v1h-1zM167 256h1v1h-1zM348 256h1v1h-1zM354 256h1v1h-1zM387 256h1v1h-1zM389 256h1v1h-1zM117 257h1v1h-1zM119 257h1v1h-1zM150 257h1v1h-1zM158 257h1v1h-1zM160 257h1v1h-1zM166 257h1v1h-1zM339 257h1v1h-1zM347 257h1v1h-1zM349 257h1v1h-1zM355 257h1v1h-1zM388 257h1v1h-1zM118 258h1v1h-1zM159 258h1v1h-1zM165 258h1v1h-1zM340 258h1v1h-1zM346 258h1v1h-1zM348 258h1v1h-1zM356 258h1v1h-1zM387 258h1v1h-1zM389 258h1v1h-1zM117 259h1v1h-1zM119 259h1v1h-1zM160 259h1v1h-1zM164 259h1v1h-1zM341 259h1v1h-1zM347 259h1v1h-1zM386 259h1v1h-1zM390 259h1v1h-1zM116 260h1v1h-1zM120 260h1v1h-1zM161 260h1v1h-1zM163 260h1v1h-1zM342 260h1v1h-1zM346 260h1v1h-1zM385 260h1v1h-1zM391 260h1v1h-1zM115 261h1v1h-1zM121 261h1v1h-1zM162 261h1v1h-1zM343 261h1v1h-1zM345 261h1v1h-1zM384 261h1v1h-1zM392 261h1v1h-1zM114 262h1v1h-1zM122 262h1v1h-1zM161 262h1v1h-1zM163 262h1v1h-1zM344 262h1v1h-1zM383 262h1v1h-1zM390 262h1v1h-1zM393 262h1v1h-1zM400 262h1v1h-1zM113 263h1v1h-1zM123 263h1v1h-1zM160 263h1v1h-1zM164 263h1v1h-1zM343 263h1v1h-1zM345 263h1v1h-1zM391 263h1v1h-1zM399 263h1v1h-1zM106 264h1v1h-1zM116 264h1v1h-1zM159 264h1v1h-1zM165 264h1v1h-1zM342 264h1v1h-1zM346 264h1v1h-1zM392 264h1v1h-1zM398 264h1v1h-1zM107 265h1v1h-1zM115 265h1v1h-1zM158 265h1v1h-1zM166 265h1v1h-1zM341 265h1v1h-1zM347 265h1v1h-1zM393 265h1v1h-1zM397 265h1v1h-1zM108 266h1v1h-1zM114 266h1v1h-1zM157 266h1v1h-1zM167 266h1v1h-1zM340 266h1v1h-1zM348 266h1v1h-1zM394 266h1v1h-1zM396 266h1v1h-1zM109 267h1v1h-1zM113 267h1v1h-1zM164 267h1v1h-1zM174 267h1v1h-1zM339 267h1v1h-1zM349 267h1v1h-1zM395 267h1v1h-1zM110 268h1v1h-1zM112 268h1v1h-1zM165 268h1v1h-1zM173 268h1v1h-1zM394 268h1v1h-1zM396 268h1v1h-1zM111 269h1v1h-1zM166 269h1v1h-1zM172 269h1v1h-1zM332 269h1v1h-1zM342 269h1v1h-1zM393 269h1v1h-1zM397 269h1v1h-1zM110 270h1v1h-1zM112 270h1v1h-1zM167 270h1v1h-1zM171 270h1v1h-1zM333 270h1v1h-1zM341 270h1v1h-1zM392 270h1v1h-1zM398 270h1v1h-1zM109 271h1v1h-1zM113 271h1v1h-1zM168 271h1v1h-1zM170 271h1v1h-1zM334 271h1v1h-1zM340 271h1v1h-1zM391 271h1v1h-1zM399 271h1v1h-1zM108 272h1v1h-1zM114 272h1v1h-1zM169 272h1v1h-1zM335 272h1v1h-1zM339 272h1v1h-1zM390 272h1v1h-1zM400 272h1v1h-1zM107 273h1v1h-1zM115 273h1v1h-1zM168 273h1v1h-1zM170 273h1v1h-1zM336 273h1v1h-1zM338 273h1v1h-1zM106 274h1v1h-1zM116 274h1v1h-1zM167 274h1v1h-1zM171 274h1v1h-1zM337 274h1v1h-1zM166 275h1v1h-1zM172 275h1v1h-1zM336 275h1v1h-1zM338 275h1v1h-1zM397 275h1v1h-1zM407 275h1v1h-1zM165 276h1v1h-1zM173 276h1v1h-1zM335 276h1v1h-1zM339 276h1v1h-1zM398 276h1v1h-1zM406 276h1v1h-1zM99 277h1v1h-1zM109 277h1v1h-1zM164 277h1v1h-1zM174 277h1v1h-1zM334 277h1v1h-1zM340 277h1v1h-1zM399 277h1v1h-1zM405 277h1v1h-1zM100 278h1v1h-1zM108 278h1v1h-1zM333 278h1v1h-1zM341 278h1v1h-1zM400 278h1v1h-1zM404 278h1v1h-1zM101 279h1v1h-1zM107 279h1v1h-1zM332 279h1v1h-1zM342 279h1v1h-1zM401 279h1v1h-1zM403 279h1v1h-1zM102 280h1v1h-1zM106 280h1v1h-1zM402 280h1v1h-1zM103 281h1v1h-1zM105 281h1v1h-1zM171 281h1v1h-1zM181 281h1v1h-1zM401 281h1v1h-1zM403 281h1v1h-1zM104 282h1v1h-1zM172 282h1v1h-1zM180 282h1v1h-1zM400 282h1v1h-1zM404 282h1v1h-1zM103 283h1v1h-1zM105 283h1v1h-1zM173 283h1v1h-1zM179 283h1v1h-1zM324 283h1v1h-1zM334 283h1v1h-1zM399 283h1v1h-1zM405 283h1v1h-1zM102 284h1v1h-1zM106 284h1v1h-1zM174 284h1v1h-1zM178 284h1v1h-1zM325 284h1v1h-1zM333 284h1v1h-1zM398 284h1v1h-1zM406 284h1v1h-1zM101 285h1v1h-1zM107 285h1v1h-1zM175 285h1v1h-1zM177 285h1v1h-1zM326 285h1v1h-1zM332 285h1v1h-1zM397 285h1v1h-1zM407 285h1v1h-1zM100 286h1v1h-1zM108 286h1v1h-1zM176 286h1v1h-1zM327 286h1v1h-1zM331 286h1v1h-1zM99 287h1v1h-1zM109 287h1v1h-1zM175 287h1v1h-1zM177 287h1v1h-1zM328 287h1v1h-1zM330 287h1v1h-1zM174 288h1v1h-1zM178 288h1v1h-1zM329 288h1v1h-1zM173 289h1v1h-1zM179 289h1v1h-1zM328 289h1v1h-1zM330 289h1v1h-1zM172 290h1v1h-1zM180 290h1v1h-1zM327 290h1v1h-1zM331 290h1v1h-1zM404 290h1v1h-1zM414 290h1v1h-1zM171 291h1v1h-1zM181 291h1v1h-1zM326 291h1v1h-1zM332 291h1v1h-1zM405 291h1v1h-1zM413 291h1v1h-1zM91 292h1v1h-1zM101 292h1v1h-1zM325 292h1v1h-1zM333 292h1v1h-1zM406 292h1v1h-1zM412 292h1v1h-1zM92 293h1v1h-1zM100 293h1v1h-1zM324 293h1v1h-1zM334 293h1v1h-1zM407 293h1v1h-1zM411 293h1v1h-1zM93 294h1v1h-1zM99 294h1v1h-1zM408 294h1v1h-1zM410 294h1v1h-1zM94 295h1v1h-1zM98 295h1v1h-1zM409 295h1v1h-1zM95 296h1v1h-1zM97 296h1v1h-1zM408 296h1v1h-1zM410 296h1v1h-1zM96 297h1v1h-1zM179 297h1v1h-1zM189 297h1v1h-1zM407 297h1v1h-1zM411 297h1v1h-1zM95 298h1v1h-1zM97 298h1v1h-1zM180 298h1v1h-1zM188 298h1v1h-1zM406 298h1v1h-1zM412 298h1v1h-1zM94 299h1v1h-1zM98 299h1v1h-1zM181 299h1v1h-1zM187 299h1v1h-1zM317 299h1v1h-1zM327 299h1v1h-1zM405 299h1v1h-1zM413 299h1v1h-1zM93 300h1v1h-1zM99 300h1v1h-1zM182 300h1v1h-1zM186 300h1v1h-1zM318 300h1v1h-1zM326 300h1v1h-1zM404 300h1v1h-1zM414 300h1v1h-1zM92 301h1v1h-1zM100 301h1v1h-1zM183 301h1v1h-1zM185 301h1v1h-1zM319 301h1v1h-1zM325 301h1v1h-1zM91 302h1v1h-1zM101 302h1v1h-1zM184 302h1v1h-1zM320 302h1v1h-1zM324 302h1v1h-1zM183 303h1v1h-1zM185 303h1v1h-1zM321 303h1v1h-1zM323 303h1v1h-1zM182 304h1v1h-1zM186 304h1v1h-1zM322 304h1v1h-1zM181 305h1v1h-1zM187 305h1v1h-1zM321 305h1v1h-1zM323 305h1v1h-1zM180 306h1v1h-1zM188 306h1v1h-1zM320 306h1v1h-1zM324 306h1v1h-1zM412 306h1v1h-1zM422 306h1v1h-1zM179 307h1v1h-1zM189 307h1v1h-1zM319 307h1v1h-1zM325 307h1v1h-1zM413 307h1v1h-1zM421 307h1v1h-1zM84 308h1v1h-1zM94 308h1v1h-1zM318 308h1v1h-1zM326 308h1v1h-1zM414 308h1v1h-1zM420 308h1v1h-1zM85 309h1v1h-1zM93 309h1v1h-1zM317 309h1v1h-1zM327 309h1v1h-1zM415 309h1v1h-1zM419 309h1v1h-1zM86 310h1v1h-1zM92 310h1v1h-1zM416 310h1v1h-1zM418 310h1v1h-1zM87 311h1v1h-1zM91 311h1v1h-1zM417 311h1v1h-1zM88 312h1v1h-1zM90 312h1v1h-1zM416 312h1v1h-1zM418 312h1v1h-1zM89 313h1v1h-1zM186 313h1v1h-1zM196 313h1v1h-1zM415 313h1v1h-1zM419 313h1v1h-1zM88 314h1v1h-1zM90 314h1v1h-1zM187 314h1v1h-1zM195 314h1v1h-1zM414 314h1v1h-1zM420 314h1v1h-1zM87 315h1v1h-1zM91 315h1v1h-1zM188 315h1v1h-1zM194 315h1v1h-1zM310 315h1v1h-1zM320 315h1v1h-1zM413 315h1v1h-1zM421 315h1v1h-1zM86 316h1v1h-1zM92 316h1v1h-1zM189 316h1v1h-1zM193 316h1v1h-1zM311 316h1v1h-1zM319 316h1v1h-1zM412 316h1v1h-1zM422 316h1v1h-1zM85 317h1v1h-1zM93 317h1v1h-1zM190 317h1v1h-1zM192 317h1v1h-1zM312 317h1v1h-1zM318 317h1v1h-1zM84 318h1v1h-1zM94 318h1v1h-1zM191 318h1v1h-1zM313 318h1v1h-1zM317 318h1v1h-1zM190 319h1v1h-1zM192 319h1v1h-1zM314 319h1v1h-1zM316 319h1v1h-1zM189 320h1v1h-1zM193 320h1v1h-1zM315 320h1v1h-1zM188 321h1v1h-1zM194 321h1v1h-1zM314 321h1v1h-1zM316 321h1v1h-1zM187 322h1v1h-1zM195 322h1v1h-1zM313 322h1v1h-1zM317 322h1v1h-1zM186 323h1v1h-1zM196 323h1v1h-1zM312 323h1v1h-1zM318 323h1v1h-1zM419 323h1v1h-1zM429 323h1v1h-1zM311 324h1v1h-1zM319 324h1v1h-1zM420 324h1v1h-1zM428 324h1v1h-1zM310 325h1v1h-1zM320 325h1v1h-1zM421 325h1v1h-1zM427 325h1v1h-1zM87 326h1v1h-1zM422 326h1v1h-1zM426 326h1v1h-1zM86 327h1v1h-1zM423 327h1v1h-1zM425 327h1v1h-1zM85 328h1v1h-1zM424 328h1v1h-1zM84 329h1v1h-1zM423 329h1v1h-1zM425 329h1v1h-1zM83 330h1v1h-1zM422 330h1v1h-1zM426 330h1v1h-1zM82 331h1v1h-1zM193 331h1v1h-1zM203 331h1v1h-1zM421 331h1v1h-1zM427 331h1v1h-1zM83 332h1v1h-1zM194 332h1v1h-1zM202 332h1v1h-1zM420 332h1v1h-1zM428 332h1v1h-1zM84 333h1v1h-1zM195 333h1v1h-1zM201 333h1v1h-1zM302 333h1v1h-1zM312 333h1v1h-1zM419 333h1v1h-1zM429 333h1v1h-1zM85 334h1v1h-1zM196 334h1v1h-1zM200 334h1v1h-1zM303 334h1v1h-1zM311 334h1v1h-1zM86 335h1v1h-1zM197 335h1v1h-1zM199 335h1v1h-1zM304 335h1v1h-1zM310 335h1v1h-1zM87 336h1v1h-1zM198 336h1v1h-1zM305 336h1v1h-1zM309 336h1v1h-1zM197 337h1v1h-1zM199 337h1v1h-1zM306 337h1v1h-1zM308 337h1v1h-1zM196 338h1v1h-1zM200 338h1v1h-1zM307 338h1v1h-1zM195 339h1v1h-1zM201 339h1v1h-1zM306 339h1v1h-1zM308 339h1v1h-1zM194 340h1v1h-1zM202 340h1v1h-1zM305 340h1v1h-1zM309 340h1v1h-1zM528 340h1v1h-1zM538 340h1v1h-1zM193 341h1v1h-1zM203 341h1v1h-1zM304 341h1v1h-1zM310 341h1v1h-1zM426 341h1v1h-1zM436 341h1v1h-1zM529 341h1v1h-1zM537 341h1v1h-1zM303 342h1v1h-1zM311 342h1v1h-1zM427 342h1v1h-1zM435 342h1v1h-1zM530 342h1v1h-1zM536 342h1v1h-1zM302 343h1v1h-1zM312 343h1v1h-1zM428 343h1v1h-1zM434 343h1v1h-1zM531 343h1v1h-1zM535 343h1v1h-1zM429 344h1v1h-1zM433 344h1v1h-1zM532 344h1v1h-1zM534 344h1v1h-1zM430 345h1v1h-1zM432 345h1v1h-1zM533 345h1v1h-1zM431 346h1v1h-1zM532 346h1v1h-1zM534 346h1v1h-1zM430 347h1v1h-1zM432 347h1v1h-1zM531 347h1v1h-1zM535 347h1v1h-1zM201 348h1v1h-1zM211 348h1v1h-1zM429 348h1v1h-1zM433 348h1v1h-1zM530 348h1v1h-1zM536 348h1v1h-1zM202 349h1v1h-1zM210 349h1v1h-1zM428 349h1v1h-1zM434 349h1v1h-1zM529 349h1v1h-1zM537 349h1v1h-1zM203 350h1v1h-1zM209 350h1v1h-1zM295 350h1v1h-1zM305 350h1v1h-1zM427 350h1v1h-1zM435 350h1v1h-1zM528 350h1v1h-1zM538 350h1v1h-1zM204 351h1v1h-1zM208 351h1v1h-1zM296 351h1v1h-1zM304 351h1v1h-1zM426 351h1v1h-1zM436 351h1v1h-1zM205 352h1v1h-1zM207 352h1v1h-1zM297 352h1v1h-1zM303 352h1v1h-1zM206 353h1v1h-1zM298 353h1v1h-1zM302 353h1v1h-1zM205 354h1v1h-1zM207 354h1v1h-1zM299 354h1v1h-1zM301 354h1v1h-1zM204 355h1v1h-1zM208 355h1v1h-1zM300 355h1v1h-1zM203 356h1v1h-1zM209 356h1v1h-1zM299 356h1v1h-1zM301 356h1v1h-1zM521 356h1v1h-1zM531 356h1v1h-1zM202 357h1v1h-1zM210 357h1v1h-1zM298 357h1v1h-1zM302 357h1v1h-1zM434 357h1v1h-1zM444 357h1v1h-1zM522 357h1v1h-1zM530 357h1v1h-1zM201 358h1v1h-1zM211 358h1v1h-1zM297 358h1v1h-1zM303 358h1v1h-1zM435 358h1v1h-1zM443 358h1v1h-1zM523 358h1v1h-1zM529 358h1v1h-1zM296 359h1v1h-1zM304 359h1v1h-1zM436 359h1v1h-1zM442 359h1v1h-1zM524 359h1v1h-1zM528 359h1v1h-1zM295 360h1v1h-1zM305 360h1v1h-1zM437 360h1v1h-1zM441 360h1v1h-1zM525 360h1v1h-1zM527 360h1v1h-1zM438 361h1v1h-1zM440 361h1v1h-1zM526 361h1v1h-1zM439 362h1v1h-1zM525 362h1v1h-1zM527 362h1v1h-1zM438 363h1v1h-1zM440 363h1v1h-1zM524 363h1v1h-1zM528 363h1v1h-1zM208 364h1v1h-1zM218 364h1v1h-1zM437 364h1v1h-1zM441 364h1v1h-1zM523 364h1v1h-1zM529 364h1v1h-1zM209 365h1v1h-1zM217 365h1v1h-1zM436 365h1v1h-1zM442 365h1v1h-1zM522 365h1v1h-1zM530 365h1v1h-1zM210 366h1v1h-1zM216 366h1v1h-1zM288 366h1v1h-1zM298 366h1v1h-1zM435 366h1v1h-1zM443 366h1v1h-1zM521 366h1v1h-1zM531 366h1v1h-1zM211 367h1v1h-1zM215 367h1v1h-1zM289 367h1v1h-1zM297 367h1v1h-1zM434 367h1v1h-1zM444 367h1v1h-1zM212 368h1v1h-1zM214 368h1v1h-1zM290 368h1v1h-1zM296 368h1v1h-1zM213 369h1v1h-1zM291 369h1v1h-1zM295 369h1v1h-1zM212 370h1v1h-1zM214 370h1v1h-1zM292 370h1v1h-1zM294 370h1v1h-1zM211 371h1v1h-1zM215 371h1v1h-1zM293 371h1v1h-1zM210 372h1v1h-1zM216 372h1v1h-1zM292 372h1v1h-1zM294 372h1v1h-1zM441 372h1v1h-1zM451 372h1v1h-1zM514 372h1v1h-1zM524 372h1v1h-1zM209 373h1v1h-1zM217 373h1v1h-1zM291 373h1v1h-1zM295 373h1v1h-1zM442 373h1v1h-1zM450 373h1v1h-1zM515 373h1v1h-1zM523 373h1v1h-1zM208 374h1v1h-1zM218 374h1v1h-1zM290 374h1v1h-1zM296 374h1v1h-1zM443 374h1v1h-1zM449 374h1v1h-1zM516 374h1v1h-1zM522 374h1v1h-1zM289 375h1v1h-1zM297 375h1v1h-1zM444 375h1v1h-1zM448 375h1v1h-1zM517 375h1v1h-1zM521 375h1v1h-1zM288 376h1v1h-1zM298 376h1v1h-1zM445 376h1v1h-1zM447 376h1v1h-1zM518 376h1v1h-1zM520 376h1v1h-1zM446 377h1v1h-1zM519 377h1v1h-1zM215 378h1v1h-1zM225 378h1v1h-1zM445 378h1v1h-1zM447 378h1v1h-1zM518 378h1v1h-1zM520 378h1v1h-1zM216 379h1v1h-1zM224 379h1v1h-1zM444 379h1v1h-1zM448 379h1v1h-1zM517 379h1v1h-1zM521 379h1v1h-1zM217 380h1v1h-1zM223 380h1v1h-1zM281 380h1v1h-1zM291 380h1v1h-1zM443 380h1v1h-1zM449 380h1v1h-1zM516 380h1v1h-1zM522 380h1v1h-1zM218 381h1v1h-1zM222 381h1v1h-1zM282 381h1v1h-1zM290 381h1v1h-1zM442 381h1v1h-1zM450 381h1v1h-1zM515 381h1v1h-1zM523 381h1v1h-1zM219 382h1v1h-1zM221 382h1v1h-1zM283 382h1v1h-1zM289 382h1v1h-1zM441 382h1v1h-1zM451 382h1v1h-1zM514 382h1v1h-1zM524 382h1v1h-1zM220 383h1v1h-1zM284 383h1v1h-1zM288 383h1v1h-1zM219 384h1v1h-1zM221 384h1v1h-1zM285 384h1v1h-1zM287 384h1v1h-1zM218 385h1v1h-1zM222 385h1v1h-1zM286 385h1v1h-1zM506 385h1v1h-1zM516 385h1v1h-1zM217 386h1v1h-1zM223 386h1v1h-1zM285 386h1v1h-1zM287 386h1v1h-1zM448 386h1v1h-1zM458 386h1v1h-1zM507 386h1v1h-1zM515 386h1v1h-1zM216 387h1v1h-1zM224 387h1v1h-1zM284 387h1v1h-1zM288 387h1v1h-1zM449 387h1v1h-1zM457 387h1v1h-1zM508 387h1v1h-1zM514 387h1v1h-1zM215 388h1v1h-1zM225 388h1v1h-1zM283 388h1v1h-1zM289 388h1v1h-1zM450 388h1v1h-1zM456 388h1v1h-1zM509 388h1v1h-1zM513 388h1v1h-1zM282 389h1v1h-1zM290 389h1v1h-1zM451 389h1v1h-1zM455 389h1v1h-1zM510 389h1v1h-1zM512 389h1v1h-1zM281 390h1v1h-1zM291 390h1v1h-1zM452 390h1v1h-1zM454 390h1v1h-1zM511 390h1v1h-1zM222 391h1v1h-1zM232 391h1v1h-1zM453 391h1v1h-1zM510 391h1v1h-1zM512 391h1v1h-1zM223 392h1v1h-1zM231 392h1v1h-1zM273 392h1v1h-1zM283 392h1v1h-1zM452 392h1v1h-1zM454 392h1v1h-1zM509 392h1v1h-1zM513 392h1v1h-1zM224 393h1v1h-1zM230 393h1v1h-1zM274 393h1v1h-1zM282 393h1v1h-1zM451 393h1v1h-1zM455 393h1v1h-1zM508 393h1v1h-1zM514 393h1v1h-1zM225 394h1v1h-1zM229 394h1v1h-1zM275 394h1v1h-1zM281 394h1v1h-1zM450 394h1v1h-1zM456 394h1v1h-1zM507 394h1v1h-1zM515 394h1v1h-1zM226 395h1v1h-1zM228 395h1v1h-1zM276 395h1v1h-1zM280 395h1v1h-1zM449 395h1v1h-1zM457 395h1v1h-1zM506 395h1v1h-1zM516 395h1v1h-1zM227 396h1v1h-1zM277 396h1v1h-1zM279 396h1v1h-1zM448 396h1v1h-1zM458 396h1v1h-1zM499 396h1v1h-1zM509 396h1v1h-1zM226 397h1v1h-1zM228 397h1v1h-1zM278 397h1v1h-1zM455 397h1v1h-1zM465 397h1v1h-1zM500 397h1v1h-1zM508 397h1v1h-1zM225 398h1v1h-1zM229 398h1v1h-1zM277 398h1v1h-1zM279 398h1v1h-1zM456 398h1v1h-1zM464 398h1v1h-1zM501 398h1v1h-1zM507 398h1v1h-1zM224 399h1v1h-1zM230 399h1v1h-1zM276 399h1v1h-1zM280 399h1v1h-1zM457 399h1v1h-1zM463 399h1v1h-1zM502 399h1v1h-1zM506 399h1v1h-1zM223 400h1v1h-1zM231 400h1v1h-1zM275 400h1v1h-1zM281 400h1v1h-1zM458 400h1v1h-1zM462 400h1v1h-1zM503 400h1v1h-1zM505 400h1v1h-1zM222 401h1v1h-1zM230 401h1v1h-1zM232 401h1v1h-1zM240 401h1v1h-1zM274 401h1v1h-1zM282 401h1v1h-1zM459 401h1v1h-1zM461 401h1v1h-1zM504 401h1v1h-1zM231 402h1v1h-1zM239 402h1v1h-1zM266 402h1v1h-1zM273 402h1v1h-1zM276 402h1v1h-1zM283 402h1v1h-1zM460 402h1v1h-1zM503 402h1v1h-1zM505 402h1v1h-1zM232 403h1v1h-1zM238 403h1v1h-1zM267 403h1v1h-1zM275 403h1v1h-1zM459 403h1v1h-1zM461 403h1v1h-1zM502 403h1v1h-1zM506 403h1v1h-1zM233 404h1v1h-1zM237 404h1v1h-1zM268 404h1v1h-1zM274 404h1v1h-1zM458 404h1v1h-1zM462 404h1v1h-1zM501 404h1v1h-1zM507 404h1v1h-1zM234 405h1v1h-1zM236 405h1v1h-1zM269 405h1v1h-1zM273 405h1v1h-1zM457 405h1v1h-1zM463 405h1v1h-1zM473 405h1v1h-1zM492 405h1v1h-1zM500 405h1v1h-1zM502 405h1v1h-1zM508 405h1v1h-1zM235 406h1v1h-1zM270 406h1v1h-1zM272 406h1v1h-1zM456 406h1v1h-1zM464 406h1v1h-1zM472 406h1v1h-1zM493 406h1v1h-1zM499 406h1v1h-1zM501 406h1v1h-1zM509 406h1v1h-1zM234 407h1v1h-1zM236 407h1v1h-1zM271 407h1v1h-1zM455 407h1v1h-1zM465 407h1v1h-1zM471 407h1v1h-1zM494 407h1v1h-1zM500 407h1v1h-1zM233 408h1v1h-1zM237 408h1v1h-1zM247 408h1v1h-1zM259 408h1v1h-1zM269 408h2v1h-2zM272 408h1v1h-1zM466 408h1v1h-1zM470 408h1v1h-1zM495 408h1v1h-1zM499 408h1v1h-1zM232 409h1v1h-1zM238 409h1v1h-1zM246 409h1v1h-1zM260 409h1v1h-1zM268 409h2v1h-2zM273 409h1v1h-1zM467 409h1v1h-1zM469 409h1v1h-1zM496 409h1v1h-1zM498 409h1v1h-1zM231 410h1v1h-1zM239 410h1v1h-1zM245 410h1v1h-1zM261 410h1v1h-1zM267 410h2v1h-2zM274 410h1v1h-1zM468 410h1v1h-1zM470 410h1v1h-1zM480 410h1v1h-1zM484 410h1v1h-1zM494 410h1v1h-1zM497 410h1v1h-1zM230 411h1v1h-1zM240 411h1v1h-1zM244 411h1v1h-1zM252 411h1v1h-1zM254 411h1v1h-1zM262 411h1v1h-1zM266 411h2v1h-2zM275 411h1v1h-1zM467 411h1v1h-1zM469 411h1v1h-1zM471 411h1v1h-1zM479 411h1v1h-1zM485 411h1v1h-1zM493 411h1v1h-1zM496 411h1v1h-1zM498 411h1v1h-1zM241 412h1v1h-1zM243 412h1v1h-1zM245 412h1v1h-1zM253 412h1v1h-1zM261 412h1v1h-1zM263 412h1v1h-1zM265 412h2v1h-2zM276 412h1v1h-1zM466 412h1v1h-1zM470 412h1v1h-1zM472 412h1v1h-1zM477 412h2v1h-2zM486 412h2v1h-2zM492 412h1v1h-1zM495 412h1v1h-1zM499 412h1v1h-1zM242 413h1v1h-1zM246 413h1v1h-1zM252 413h1v1h-1zM254 413h1v1h-1zM260 413h1v1h-1zM264 413h1v1h-1zM465 413h1v1h-1zM471 413h1v1h-1zM473 413h1v1h-1zM477 413h2v1h-2zM486 413h2v1h-2zM491 413h1v1h-1zM494 413h1v1h-1zM500 413h1v1h-1zM241 414h1v1h-1zM243 414h1v1h-1zM247 414h1v1h-1zM251 414h1v1h-1zM255 414h1v1h-1zM259 414h1v1h-1zM263 414h1v1h-1zM265 414h1v1h-1zM464 414h1v1h-1zM472 414h1v1h-1zM474 414h1v1h-1zM476 414h1v1h-1zM479 414h1v1h-1zM485 414h1v1h-1zM488 414h1v1h-1zM490 414h1v1h-1zM493 414h1v1h-1zM501 414h1v1h-1zM240 415h1v1h-1zM244 415h1v1h-1zM248 415h1v1h-1zM250 415h1v1h-1zM256 415h1v1h-1zM258 415h1v1h-1zM262 415h1v1h-1zM266 415h1v1h-1zM463 415h1v1h-1zM473 415h1v1h-1zM475 415h1v1h-1zM480 415h1v1h-1zM484 415h1v1h-1zM489 415h1v1h-1zM492 415h1v1h-1zM502 415h1v1h-1zM239 416h1v1h-1zM245 416h1v1h-1zM249 416h1v1h-1zM257 416h1v1h-1zM261 416h1v1h-1zM267 416h1v1h-1zM474 416h1v1h-1zM476 416h1v1h-1zM481 416h1v1h-1zM483 416h1v1h-1zM488 416h1v1h-1zM490 416h1v1h-1zM238 417h1v1h-1zM246 417h1v1h-1zM248 417h1v1h-1zM250 417h1v1h-1zM256 417h1v1h-1zM258 417h1v1h-1zM260 417h1v1h-1zM268 417h1v1h-1zM473 417h1v1h-1zM477 417h1v1h-1zM482 417h1v1h-1zM487 417h1v1h-1zM491 417h1v1h-1zM237 418h1v1h-1zM247 418h1v1h-1zM251 418h1v1h-1zM255 418h1v1h-1zM259 418h1v1h-1zM269 418h1v1h-1zM472 418h1v1h-1zM478 418h1v1h-1zM481 418h1v1h-1zM483 418h1v1h-1zM486 418h1v1h-1zM492 418h1v1h-1zM246 419h1v1h-1zM252 419h1v1h-1zM254 419h1v1h-1zM260 419h1v1h-1zM471 419h1v1h-1zM479 419h2v1h-2zM484 419h2v1h-2zM493 419h1v1h-1zM245 420h1v1h-1zM253 420h1v1h-1zM261 420h1v1h-1zM470 420h1v1h-1zM479 420h2v1h-2zM484 420h2v1h-2zM494 420h1v1h-1zM244 421h1v1h-1zM252 421h1v1h-1zM254 421h1v1h-1zM262 421h1v1h-1zM478 421h1v1h-1zM486 421h1v1h-1zM477 422h1v1h-1zM487 422h1v1h-1z"/>
<defs><clipPath id="axc"><rect x="82" y="158" width="458" height="346"/></clipPath></defs>
<path stroke="#000" stroke-width="1.2" fill="none" shape-rendering="auto" clip-path="url(#axc)" d="M77.5 326.5L87.5 336.5M77.5 336.5L87.5 326.5M84.5 308.5L94.5 318.5M84.5 318.5L94.5 308.5M91.5 292.5L101.5 302.5M91.5 302.5L101.5 292.5M99.5 277.5L109.5 287.5M99.5 287.5L109.5 277.5M106.5 264.5L116.5 274.5M106.5 274.5L116.5 264.5M113.5 253.5L123.5 263.5M113.5 263.5L123.5 253.5M120.5 245.5L130.5 255.5M120.5 255.5L130.5 245.5M128.5 241.5L138.5 251.5M128.5 251.5L138.5 241.5M135.5 239.5L145.5 249.5M135.5 249.5L145.5 239.5M142.5 242.5L152.5 252.5M142.5 252.5L152.5 242.5M150.5 247.5L160.5 257.5M150.5 257.5L160.5 247.5M157.5 256.5L167.5 266.5M157.5 266.5L167.5 256.5M164.5 267.5L174.5 277.5M164.5 277.5L174.5 267.5M171.5 281.5L181.5 291.5M171.5 291.5L181.5 281.5M179.5 297.5L189.5 307.5M179.5 307.5L189.5 297.5M186.5 313.5L196.5 323.5M186.5 323.5L196.5 313.5M193.5 331.5L203.5 341.5M193.5 341.5L203.5 331.5M201.5 348.5L211.5 358.5M201.5 358.5L211.5 348.5M208.5 364.5L218.5 374.5M208.5 374.5L218.5 364.5M215.5 378.5L225.5 388.5M215.5 388.5L225.5 378.5M222.5 391.5L232.5 401.5M222.5 401.5L232.5 391.5M230.5 401.5L240.5 411.5M230.5 411.5L240.5 401.5M237.5 408.5L247.5 418.5M237.5 418.5L247.5 408.5M244.5 411.5L254.5 421.5M244.5 421.5L254.5 411.5M252.5 411.5L262.5 421.5M252.5 421.5L262.5 411.5M259.5 408.5L269.5 418.5M259.5 418.5L269.5 408.5M266.5 402.5L276.5 412.5M266.5 412.5L276.5 402.5M273.5 392.5L283.5 402.5M273.5 402.5L283.5 392.5M281.5 380.5L291.5 390.5M281.5 390.5L291.5 380.5M288.5 366.5L298.5 376.5M288.5 376.5L298.5 366.5M295.5 350.5L305.5 360.5M295.5 360.5L305.5 350.5M302.5 333.5L312.5 343.5M302.5 343.5L312.5 333.5M310.5 315.5L320.5 325.5M310.5 325.5L320.5 315.5M317.5 299.5L327.5 309.5M317.5 309.5L327.5 299.5M324.5 283.5L334.5 293.5M324.5 293.5L334.5 283.5M332.5 269.5L342.5 279.5M332.5 279.5L342.5 269.5M339.5 257.5L349.5 267.5M339.5 267.5L349.5 257.5M346.5 248.5L356.5 258.5M346.5 258.5L356.5 248.5M353.5 242.5L363.5 252.5M353.5 252.5L363.5 242.5M361.5 239.5L371.5 249.5M361.5 249.5L371.5 239.5M368.5 240.5L378.5 250.5M368.5 250.5L378.5 240.5M375.5 244.5L385.5 254.5M375.5 254.5L385.5 244.5M383.5 252.5L393.5 262.5M383.5 262.5L393.5 252.5M390.5 262.5L400.5 272.5M390.5 272.5L400.5 262.5M397.5 275.5L407.5 285.5M397.5 285.5L407.5 275.5M404.5 290.5L414.5 300.5M404.5 300.5L414.5 290.5M412.5 306.5L422.5 316.5M412.5 316.5L422.5 306.5M419.5 323.5L429.5 333.5M419.5 333.5L429.5 323.5M426.5 341.5L436.5 351.5M426.5 351.5L436.5 341.5M434.5 357.5L444.5 367.5M434.5 367.5L444.5 357.5M441.5 372.5L451.5 382.5M441.5 382.5L451.5 372.5M448.5 386.5L458.5 396.5M448.5 396.5L458.5 386.5M455.5 397.5L465.5 407.5M455.5 407.5L465.5 397.5M463.5 405.5L473.5 415.5M463.5 415.5L473.5 405.5M470.5 410.5L480.5 420.5M470.5 420.5L480.5 410.5M477.5 412.5L487.5 422.5M477.5 422.5L487.5 412.5M484.5 410.5L494.5 420.5M484.5 420.5L494.5 410.5M492.5 405.5L502.5 415.5M492.5 415.5L502.5 405.5M499.5 396.5L509.5 406.5M499.5 406.5L509.5 396.5M506.5 385.5L516.5 395.5M506.5 395.5L516.5 385.5M514.5 372.5L524.5 382.5M514.5 382.5L524.5 372.5M521.5 356.5L531.5 366.5M521.5 366.5L531.5 356.5M528.5 340.5L538.5 350.5M528.5 350.5L538.5 340.5"/>
<path fill="#000" d="M76 158h464v1h-464zM82 159h1v1h-1zM539 159h1v1h-1zM82 160h1v1h-1zM539 160h1v1h-1zM82 161h1v1h-1zM539 161h1v1h-1zM82 162h1v1h-1zM539 162h1v1h-1zM82 163h1v1h-1zM539 163h1v1h-1zM82 164h1v1h-1zM539 164h1v1h-1zM82 165h1v1h-1zM539 165h1v1h-1zM82 166h1v1h-1zM539 166h1v1h-1zM79 167h4v1h-4zM539 167h1v1h-1zM82 168h1v1h-1zM539 168h1v1h-1zM82 169h1v1h-1zM539 169h1v1h-1zM82 170h1v1h-1zM539 170h1v1h-1zM82 171h1v1h-1zM539 171h1v1h-1zM82 172h1v1h-1zM539 172h1v1h-1zM82 173h1v1h-1zM539 173h1v1h-1zM82 174h1v1h-1zM539 174h1v1h-1zM76 175h7v1h-7zM539 175h1v1h-1zM82 176h1v1h-1zM539 176h1v1h-1zM82 177h1v1h-1zM539 177h1v1h-1zM82 178h1v1h-1zM539 178h1v1h-1zM82 179h1v1h-1zM539 179h1v1h-1zM82 180h1v1h-1zM539 180h1v1h-1zM82 181h1v1h-1zM539 181h1v1h-1zM82 182h1v1h-1zM539 182h1v1h-1zM82 183h1v1h-1zM539 183h1v1h-1zM79 184h4v1h-4zM539 184h1v1h-1zM82 185h1v1h-1zM539 185h1v1h-1zM82 186h1v1h-1zM539 186h1v1h-1zM82 187h1v1h-1zM539 187h1v1h-1zM82 188h1v1h-1zM539 188h1v1h-1zM82 189h1v1h-1zM539 189h1v1h-1zM82 190h1v1h-1zM539 190h1v1h-1zM82 191h1v1h-1zM539 191h1v1h-1zM76 192h7v1h-7zM539 192h1v1h-1zM82 193h1v1h-1zM539 193h1v1h-1zM82 194h1v1h-1zM539 194h1v1h-1zM82 195h1v1h-1zM539 195h1v1h-1zM82 196h1v1h-1zM539 196h1v1h-1zM82 197h1v1h-1zM539 197h1v1h-1zM82 198h1v1h-1zM539 198h1v1h-1zM82 199h1v1h-1zM539 199h1v1h-1zM82 200h1v1h-1zM539 200h1v1h-1zM79 201h4v1h-4zM539 201h1v1h-1zM82 202h1v1h-1zM539 202h1v1h-1zM82 203h1v1h-1zM539 203h1v1h-1zM82 204h1v1h-1zM539 204h1v1h-1zM82 205h1v1h-1zM539 205h1v1h-1zM82 206h1v1h-1zM539 206h1v1h-1zM82 207h1v1h-1zM539 207h1v1h-1zM82 208h1v1h-1zM539 208h1v1h-1zM82 209h1v1h-1zM539 209h1v1h-1zM76 210h7v1h-7zM539 210h1v1h-1zM82 211h1v1h-1zM539 211h1v1h-1zM82 212h1v1h-1zM539 212h1v1h-1zM82 213h1v1h-1zM539 213h1v1h-1zM82 214h1v1h-1zM539 214h1v1h-1zM82 215h1v1h-1zM539 215h1v1h-1zM82 216h1v1h-1zM539 216h1v1h-1zM82 217h1v1h-1zM539 217h1v1h-1zM79 218h4v1h-4zM539 218h1v1h-1zM82 219h1v1h-1zM539 219h1v1h-1zM82 220h1v1h-1zM539 220h1v1h-1zM82 221h1v1h-1zM539 221h1v1h-1zM82 222h1v1h-1zM539 222h1v1h-1zM82 223h1v1h-1zM539 223h1v1h-1zM82 224h1v1h-1zM539 224h1v1h-1zM82 225h1v1h-1zM539 225h1v1h-1zM82 226h1v1h-1zM539 226h1v1h-1zM76 227h7v1h-7zM539 227h1v1h-1zM82 228h1v1h-1zM539 228h1v1h-1zM82 229h1v1h-1zM539 229h1v1h-1zM82 230h1v1h-1zM539 230h1v1h-1zM82 231h1v1h-1zM539 231h1v1h-1zM82 232h1v1h-1zM539 232h1v1h-1zM82 233h1v1h-1zM539 233h1v1h-1zM82 234h1v1h-1zM539 234h1v1h-1zM82 235h1v1h-1zM539 235h1v1h-1zM79 236h4v1h-4zM539 236h1v1h-1zM82 237h1v1h-1zM539 237h1v1h-1zM82 238h1v1h-1zM539 238h1v1h-1zM82 239h1v1h-1zM539 239h1v1h-1zM82 240h1v1h-1zM539 240h1v1h-1zM82 241h1v1h-1zM539 241h1v1h-1zM82 242h1v1h-1zM539 242h1v1h-1zM82 243h1v1h-1zM539 243h1v1h-1zM76 244h7v1h-7zM539 244h1v1h-1zM82 245h1v1h-1zM539 245h1v1h-1zM82 246h1v1h-1zM539 246h1v1h-1zM82 247h1v1h-1zM539 247h1v1h-1zM82 248h1v1h-1zM539 248h1v1h-1zM82 249h1v1h-1zM539 249h1v1h-1zM82 250h1v1h-1zM539 250h1v1h-1zM82 251h1v1h-1zM539 251h1v1h-1zM82 252h1v1h-1zM539 252h1v1h-1zM79 253h4v1h-4zM539 253h1v1h-1zM82 254h1v1h-1zM539 254h1v1h-1zM82 255h1v1h-1zM539 255h1v1h-1zM82 256h1v1h-1zM539 256h1v1h-1zM82 257h1v1h-1zM539 257h1v1h-1zM82 258h1v1h-1zM539 258h1v1h-1zM82 259h1v1h-1zM539 259h1v1h-1zM82 260h1v1h-1zM539 260h1v1h-1zM76 261h7v1h-7zM539 261h1v1h-1zM82 262h1v1h-1zM539 262h1v1h-1zM82 263h1v1h-1zM539 263h1v1h-1zM82 264h1v1h-1zM539 264h1v1h-1zM82 265h1v1h-1zM539 265h1v1h-1zM82 266h1v1h-1zM539 266h1v1h-1zM82 267h1v1h-1zM539 267h1v1h-1zM82 268h1v1h-1zM539 268h1v1h-1zM82 269h1v1h-1zM539 269h1v1h-1zM79 270h4v1h-4zM539 270h1v1h-1zM82 271h1v1h-1zM539 271h1v1h-1zM82 272h1v1h-1zM539 272h1v1h-1zM82 273h1v1h-1zM539 273h1v1h-1zM82 274h1v1h-1zM539 274h1v1h-1zM82 275h1v1h-1zM539 275h1v1h-1zM82 276h1v1h-1zM539 276h1v1h-1zM82 277h1v1h-1zM539 277h1v1h-1zM82 278h1v1h-1zM539 278h1v1h-1zM76 279h7v1h-7zM539 279h1v1h-1zM82 280h1v1h-1zM539 280h1v1h-1zM82 281h1v1h-1zM539 281h1v1h-1zM82 282h1v1h-1zM539 282h1v1h-1zM82 283h1v1h-1zM539 283h1v1h-1zM82 284h1v1h-1zM539 284h1v1h-1zM82 285h1v1h-1zM539 285h1v1h-1zM82 286h1v1h-1zM539 286h1v1h-1zM79 287h4v1h-4zM539 287h1v1h-1zM82 288h1v1h-1zM539 288h1v1h-1zM82 289h1v1h-1zM539 289h1v1h-1zM82 290h1v1h-1zM539 290h1v1h-1zM82 291h1v1h-1zM539 291h1v1h-1zM82 292h1v1h-1zM539 292h1v1h-1zM82 293h1v1h-1zM539 293h1v1h-1zM82 294h1v1h-1zM539 294h1v1h-1zM82 295h1v1h-1zM539 295h1v1h-1zM76 296h7v1h-7zM539 296h1v1h-1zM82 297h1v1h-1zM539 297h1v1h-1zM82 298h1v1h-1zM539 298h1v1h-1zM82 299h1v1h-1zM539 299h1v1h-1zM82 300h1v1h-1zM539 300h1v1h-1zM82 301h1v1h-1zM539 301h1v1h-1zM82 302h1v1h-1zM539 302h1v1h-1zM82 303h1v1h-1zM539 303h1v1h-1zM82 304h1v1h-1zM539 304h1v1h-1zM79 305h4v1h-4zM539 305h1v1h-1zM82 306h1v1h-1zM539 306h1v1h-1zM82 307h1v1h-1zM539 307h1v1h-1zM82 308h1v1h-1zM539 308h1v1h-1zM82 309h1v1h-1zM539 309h1v1h-1zM82 310h1v1h-1zM539 310h1v1h-1zM82 311h1v1h-1zM539 311h1v1h-1zM82 312h1v1h-1zM539 312h1v1h-1zM76 313h7v1h-7zM539 313h1v1h-1zM82 314h1v1h-1zM539 314h1v1h-1zM82 315h1v1h-1zM539 315h1v1h-1zM82 316h1v1h-1zM539 316h1v1h-1zM82 317h1v1h-1zM539 317h1v1h-1zM82 318h1v1h-1zM539 318h1v1h-1zM82 319h1v1h-1zM539 319h1v1h-1zM82 320h1v1h-1zM539 320h1v1h-1zM82 321h1v1h-1zM539 321h1v1h-1zM79 322h4v1h-4zM539 322h1v1h-1zM82 323h1v1h-1zM539 323h1v1h-1zM82 324h1v1h-1zM539 324h1v1h-1zM82 325h1v1h-1zM539 325h1v1h-1zM82 326h1v1h-1zM539 326h1v1h-1zM82 327h1v1h-1zM539 327h1v1h-1zM82 328h1v1h-1zM539 328h1v1h-1zM82 329h1v1h-1zM539 329h1v1h-1zM76 330h7v1h-7zM539 330h1v1h-1zM82 331h1v1h-1zM539 331h1v1h-1zM82 332h1v1h-1zM539 332h1v1h-1zM82 333h1v1h-1zM539 333h1v1h-1zM82 334h1v1h-1zM539 334h1v1h-1zM82 335h1v1h-1zM539 335h1v1h-1zM82 336h1v1h-1zM539 336h1v1h-1zM82 337h1v1h-1zM539 337h1v1h-1zM82 338h1v1h-1zM539 338h1v1h-1zM79 339h4v1h-4zM539 339h1v1h-1zM82 340h1v1h-1zM539 340h1v1h-1zM82 341h1v1h-1zM539 341h1v1h-1zM82 342h1v1h-1zM539 342h1v1h-1zM82 343h1v1h-1zM539 343h1v1h-1zM82 344h1v1h-1zM539 344h1v1h-1zM82 345h1v1h-1zM539 345h1v1h-1zM82 346h1v1h-1zM539 346h1v1h-1zM82 347h1v1h-1zM539 347h1v1h-1zM76 348h7v1h-7zM539 348h1v1h-1zM82 349h1v1h-1zM539 349h1v1h-1zM82 350h1v1h-1zM539 350h1v1h-1zM82 351h1v1h-1zM539 351h1v1h-1zM82 352h1v1h-1zM539 352h1v1h-1zM82 353h1v1h-1zM539 353h1v1h-1zM82 354h1v1h-1zM539 354h1v1h-1zM82 355h1v1h-1zM539 355h1v1h-1zM79 356h4v1h-4zM539 356h1v1h-1zM82 357h1v1h-1zM539 357h1v1h-1zM82 358h1v1h-1zM539 358h1v1h-1zM82 359h1v1h-1zM539 359h1v1h-1zM82 360h1v1h-1zM539 360h1v1h-1zM82 361h1v1h-1zM539 361h1v1h-1zM82 362h1v1h-1zM539 362h1v1h-1zM82 363h1v1h-1zM539 363h1v1h-1zM82 364h1v1h-1zM539 364h1v1h-1zM76 365h7v1h-7zM539 365h1v1h-1zM82 366h1v1h-1zM539 366h1v1h-1zM82 367h1v1h-1zM539 367h1v1h-1zM82 368h1v1h-1zM539 368h1v1h-1zM82 369h1v1h-1zM539 369h1v1h-1zM82 370h1v1h-1zM539 370h1v1h-1zM82 371h1v1h-1zM539 371h1v1h-1zM82 372h1v1h-1zM539 372h1v1h-1zM82 373h1v1h-1zM539 373h1v1h-1zM79 374h4v1h-4zM539 374h1v1h-1zM82 375h1v1h-1zM539 375h1v1h-1zM82 376h1v1h-1zM539 376h1v1h-1zM82 377h1v1h-1zM539 377h1v1h-1zM82 378h1v1h-1zM539 378h1v1h-1zM82 379h1v1h-1zM539 379h1v1h-1zM82 380h1v1h-1zM539 380h1v1h-1zM82 381h1v1h-1zM539 381h1v1h-1zM76 382h7v1h-7zM539 382h1v1h-1zM82 383h1v1h-1zM539 383h1v1h-1zM82 384h1v1h-1zM539 384h1v1h-1zM82 385h1v1h-1zM539 385h1v1h-1zM82 386h1v1h-1zM539 386h1v1h-1zM82 387h1v1h-1zM539 387h1v1h-1zM82 388h1v1h-1zM539 388h1v1h-1zM82 389h1v1h-1zM539 389h1v1h-1zM82 390h1v1h-1zM539 390h1v1h-1zM79 391h4v1h-4zM539 391h1v1h-1zM82 392h1v1h-1zM539 392h1v1h-1zM82 393h1v1h-1zM539 393h1v1h-1zM82 394h1v1h-1zM539 394h1v1h-1zM82 395h1v1h-1zM539 395h1v1h-1zM82 396h1v1h-1zM539 396h1v1h-1zM82 397h1v1h-1zM539 397h1v1h-1zM82 398h1v1h-1zM539 398h1v1h-1zM76 399h7v1h-7zM539 399h1v1h-1zM82 400h1v1h-1zM539 400h1v1h-1zM82 401h1v1h-1zM539 401h1v1h-1zM82 402h1v1h-1zM539 402h1v1h-1zM82 403h1v1h-1zM539 403h1v1h-1zM82 404h1v1h-1zM539 404h1v1h-1zM82 405h1v1h-1zM539 405h1v1h-1zM82 406h1v1h-1zM539 406h1v1h-1zM82 407h1v1h-1zM539 407h1v1h-1zM79 408h4v1h-4zM539 408h1v1h-1zM82 409h1v1h-1zM539 409h1v1h-1zM82 410h1v1h-1zM539 410h1v1h-1zM82 411h1v1h-1zM539 411h1v1h-1zM82 412h1v1h-1zM539 412h1v1h-1zM82 413h1v1h-1zM539 413h1v1h-1zM82 414h1v1h-1zM539 414h1v1h-1zM82 415h1v1h-1zM539 415h1v1h-1zM82 416h1v1h-1zM539 416h1v1h-1zM76 417h7v1h-7zM539 417h1v1h-1zM82 418h1v1h-1zM539 418h1v1h-1zM82 419h1v1h-1zM539 419h1v1h-1zM82 420h1v1h-1zM539 420h1v1h-1zM82 421h1v1h-1zM539 421h1v1h-1zM82 422h1v1h-1zM539 422h1v1h-1zM82 423h1v1h-1zM539 423h1v1h-1zM82 424h1v1h-1zM539 424h1v1h-1zM79 425h4v1h-4zM539 425h1v1h-1zM82 426h1v1h-1zM539 426h1v1h-1zM82 427h1v1h-1zM539 427h1v1h-1zM82 428h1v1h-1zM539 428h1v1h-1zM82 429h1v1h-1zM539 429h1v1h-1zM82 430h1v1h-1zM539 430h1v1h-1zM82 431h1v1h-1zM539 431h1v1h-1zM82 432h1v1h-1zM539 432h1v1h-1zM82 433h1v1h-1zM539 433h1v1h-1zM76 434h7v1h-7zM539 434h1v1h-1zM82 435h1v1h-1zM539 435h1v1h-1zM82 436h1v1h-1zM539 436h1v1h-1zM82 437h1v1h-1zM539 437h1v1h-1zM82 438h1v1h-1zM539 438h1v1h-1zM82 439h1v1h-1zM539 439h1v1h-1zM82 440h1v1h-1zM539 440h1v1h-1zM82 441h1v1h-1zM539 441h1v1h-1zM82 442h1v1h-1zM539 442h1v1h-1zM79 443h4v1h-4zM539 443h1v1h-1zM82 444h1v1h-1zM539 444h1v1h-1zM82 445h1v1h-1zM539 445h1v1h-1zM82 446h1v1h-1zM539 446h1v1h-1zM82 447h1v1h-1zM539 447h1v1h-1zM82 448h1v1h-1zM539 448h1v1h-1zM82 449h1v1h-1zM539 449h1v1h-1zM82 450h1v1h-1zM539 450h1v1h-1zM76 451h7v1h-7zM539 451h1v1h-1zM82 452h1v1h-1zM539 452h1v1h-1zM82 453h1v1h-1zM539 453h1v1h-1zM82 454h1v1h-1zM539 454h1v1h-1zM82 455h1v1h-1zM539 455h1v1h-1zM82 456h1v1h-1zM539 456h1v1h-1zM82 457h1v1h-1zM539 457h1v1h-1zM82 458h1v1h-1zM539 458h1v1h-1zM82 459h1v1h-1zM539 459h1v1h-1zM79 460h4v1h-4zM539 460h1v1h-1zM82 461h1v1h-1zM539 461h1v1h-1zM82 462h1v1h-1zM539 462h1v1h-1zM82 463h1v1h-1zM539 463h1v1h-1zM82 464h1v1h-1zM539 464h1v1h-1zM82 465h1v1h-1zM539 465h1v1h-1zM82 466h1v1h-1zM539 466h1v1h-1zM82 467h1v1h-1zM539 467h1v1h-1zM76 468h7v1h-7zM539 468h1v1h-1zM82 469h1v1h-1zM539 469h1v1h-1zM82 470h1v1h-1zM539 470h1v1h-1zM82 471h1v1h-1zM539 471h1v1h-1zM82 472h1v1h-1zM539 472h1v1h-1zM82 473h1v1h-1zM539 473h1v1h-1zM82 474h1v1h-1zM539 474h1v1h-1zM82 475h1v1h-1zM539 475h1v1h-1zM82 476h1v1h-1zM539 476h1v1h-1zM79 477h4v1h-4zM539 477h1v1h-1zM82 478h1v1h-1zM539 478h1v1h-1zM82 479h1v1h-1zM539 479h1v1h-1zM82 480h1v1h-1zM539 480h1v1h-1zM82 481h1v1h-1zM539 481h1v1h-1zM82 482h1v1h-1zM539 482h1v1h-1zM82 483h1v1h-1zM539 483h1v1h-1zM82 484h1v1h-1zM539 484h1v1h-1zM82 485h1v1h-1zM539 485h1v1h-1zM76 486h7v1h-7zM539 486h1v1h-1zM82 487h1v1h-1zM539 487h1v1h-1zM82 488h1v1h-1zM539 488h1v1h-1zM82 489h1v1h-1zM539 489h1v1h-1zM82 490h1v1h-1zM539 490h1v1h-1zM82 491h1v1h-1zM539 491h1v1h-1zM82 492h1v1h-1zM539 492h1v1h-1zM82 493h1v1h-1zM539 493h1v1h-1zM79 494h4v1h-4zM539 494h1v1h-1zM82 495h1v1h-1zM539 495h1v1h-1zM82 496h1v1h-1zM539 496h1v1h-1zM82 497h1v1h-1zM539 497h1v1h-1zM82 498h1v1h-1zM539 498h1v1h-1zM82 499h1v1h-1zM539 499h1v1h-1zM82 500h1v1h-1zM539 500h1v1h-1zM82 501h1v1h-1zM539 501h1v1h-1zM82 502h1v1h-1zM539 502h1v1h-1zM76 503h464v1h-464zM82 504h1v1h-1zM118 504h1v1h-1zM155 504h1v1h-1zM191 504h1v1h-1zM227 504h1v1h-1zM264 504h1v1h-1zM300 504h1v1h-1zM337 504h1v1h-1zM373 504h1v1h-1zM409 504h1v1h-1zM446 504h1v1h-1zM482 504h1v1h-1zM519 504h1v1h-1zM82 505h1v1h-1zM118 505h1v1h-1zM155 505h1v1h-1zM191 505h1v1h-1zM227 505h1v1h-1zM264 505h1v1h-1zM300 505h1v1h-1zM337 505h1v1h-1zM373 505h1v1h-1zM409 505h1v1h-1zM446 505h1v1h-1zM482 505h1v1h-1zM519 505h1v1h-1zM82 506h1v1h-1zM118 506h1v1h-1zM155 506h1v1h-1zM191 506h1v1h-1zM227 506h1v1h-1zM264 506h1v1h-1zM300 506h1v1h-1zM337 506h1v1h-1zM373 506h1v1h-1zM409 506h1v1h-1zM446 506h1v1h-1zM482 506h1v1h-1zM519 506h1v1h-1zM82 507h1v1h-1zM118 507h1v1h-1zM155 507h1v1h-1zM191 507h1v1h-1zM227 507h1v1h-1zM264 507h1v1h-1zM300 507h1v1h-1zM337 507h1v1h-1zM373 507h1v1h-1zM409 507h1v1h-1zM446 507h1v1h-1zM482 507h1v1h-1zM519 507h1v1h-1zM82 508h1v1h-1zM118 508h1v1h-1zM155 508h1v1h-1zM191 508h1v1h-1zM227 508h1v1h-1zM264 508h1v1h-1zM300 508h1v1h-1zM337 508h1v1h-1zM373 508h1v1h-1zM409 508h1v1h-1zM446 508h1v1h-1zM482 508h1v1h-1zM519 508h1v1h-1z"/>
<g font-family="Liberation Sans, sans-serif" font-size="10" fill="#000" stroke="#000" stroke-width="0.08" shape-rendering="auto">
<text transform="translate(72.9 162) scale(1.04 1)" text-anchor="end">2</text><text transform="translate(72.9 179) scale(1.04 1)" text-anchor="end">1.8</text><text transform="translate(72.9 196) scale(1.04 1)" text-anchor="end">1.6</text><text transform="translate(72.9 214) scale(1.04 1)" text-anchor="end">1.4</text><text transform="translate(72.9 231) scale(1.04 1)" text-anchor="end">1.2</text><text transform="translate(72.9 248) scale(1.04 1)" text-anchor="end">1</text><text transform="translate(72.9 265) scale(1.04 1)" text-anchor="end">0.8</text><text transform="translate(72.9 283) scale(1.04 1)" text-anchor="end">0.6</text><text transform="translate(72.9 300) scale(1.04 1)" text-anchor="end">0.4</text><text transform="translate(72.9 317) scale(1.04 1)" text-anchor="end">0.2</text><text transform="translate(72.9 334) scale(1.04 1)" text-anchor="end">0</text><text transform="translate(72.9 352) scale(1.04 1)" text-anchor="end">-0.2</text><text transform="translate(72.9 369) scale(1.04 1)" text-anchor="end">-0.4</text><text transform="translate(72.9 386) scale(1.04 1)" text-anchor="end">-0.6</text><text transform="translate(72.9 403) scale(1.04 1)" text-anchor="end">-0.8</text><text transform="translate(72.9 421) scale(1.04 1)" text-anchor="end">-1</text><text transform="translate(72.9 438) scale(1.04 1)" text-anchor="end">-1.2</text><text transform="translate(72.9 455) scale(1.04 1)" text-anchor="end">-1.4</text><text transform="translate(72.9 472) scale(1.04 1)" text-anchor="end">-1.6</text><text transform="translate(72.9 490) scale(1.04 1)" text-anchor="end">-1.8</text><text transform="translate(72.9 507) scale(1.04 1)" text-anchor="end">-2</text><text transform="translate(82.60 520) scale(1.04 1)" text-anchor="middle">0</text><text transform="translate(119.00 520) scale(1.04 1)" text-anchor="middle">0.5</text><text transform="translate(155.60 520) scale(1.04 1)" text-anchor="middle">1</text><text transform="translate(190.65 520) scale(1.04 1)" text-anchor="middle">1.5</text><text transform="translate(227.75 520) scale(1.04 1)" text-anchor="middle">2</text><text transform="translate(264.00 520) scale(1.04 1)" text-anchor="middle">2.5</text><text transform="translate(300.50 520) scale(1.04 1)" text-anchor="middle">3</text><text transform="translate(336.90 520) scale(1.04 1)" text-anchor="middle">3.5</text><text transform="translate(373.80 520) scale(1.04 1)" text-anchor="middle">4</text><text transform="translate(409.00 520) scale(1.04 1)" text-anchor="middle">4.5</text><text transform="translate(446.50 520) scale(1.04 1)" text-anchor="middle">5</text><text transform="translate(482.90 520) scale(1.04 1)" text-anchor="middle">5.5</text><text transform="translate(519.50 520) scale(1.04 1)" text-anchor="middle">6</text>
</g>
</svg>
</body></html>
